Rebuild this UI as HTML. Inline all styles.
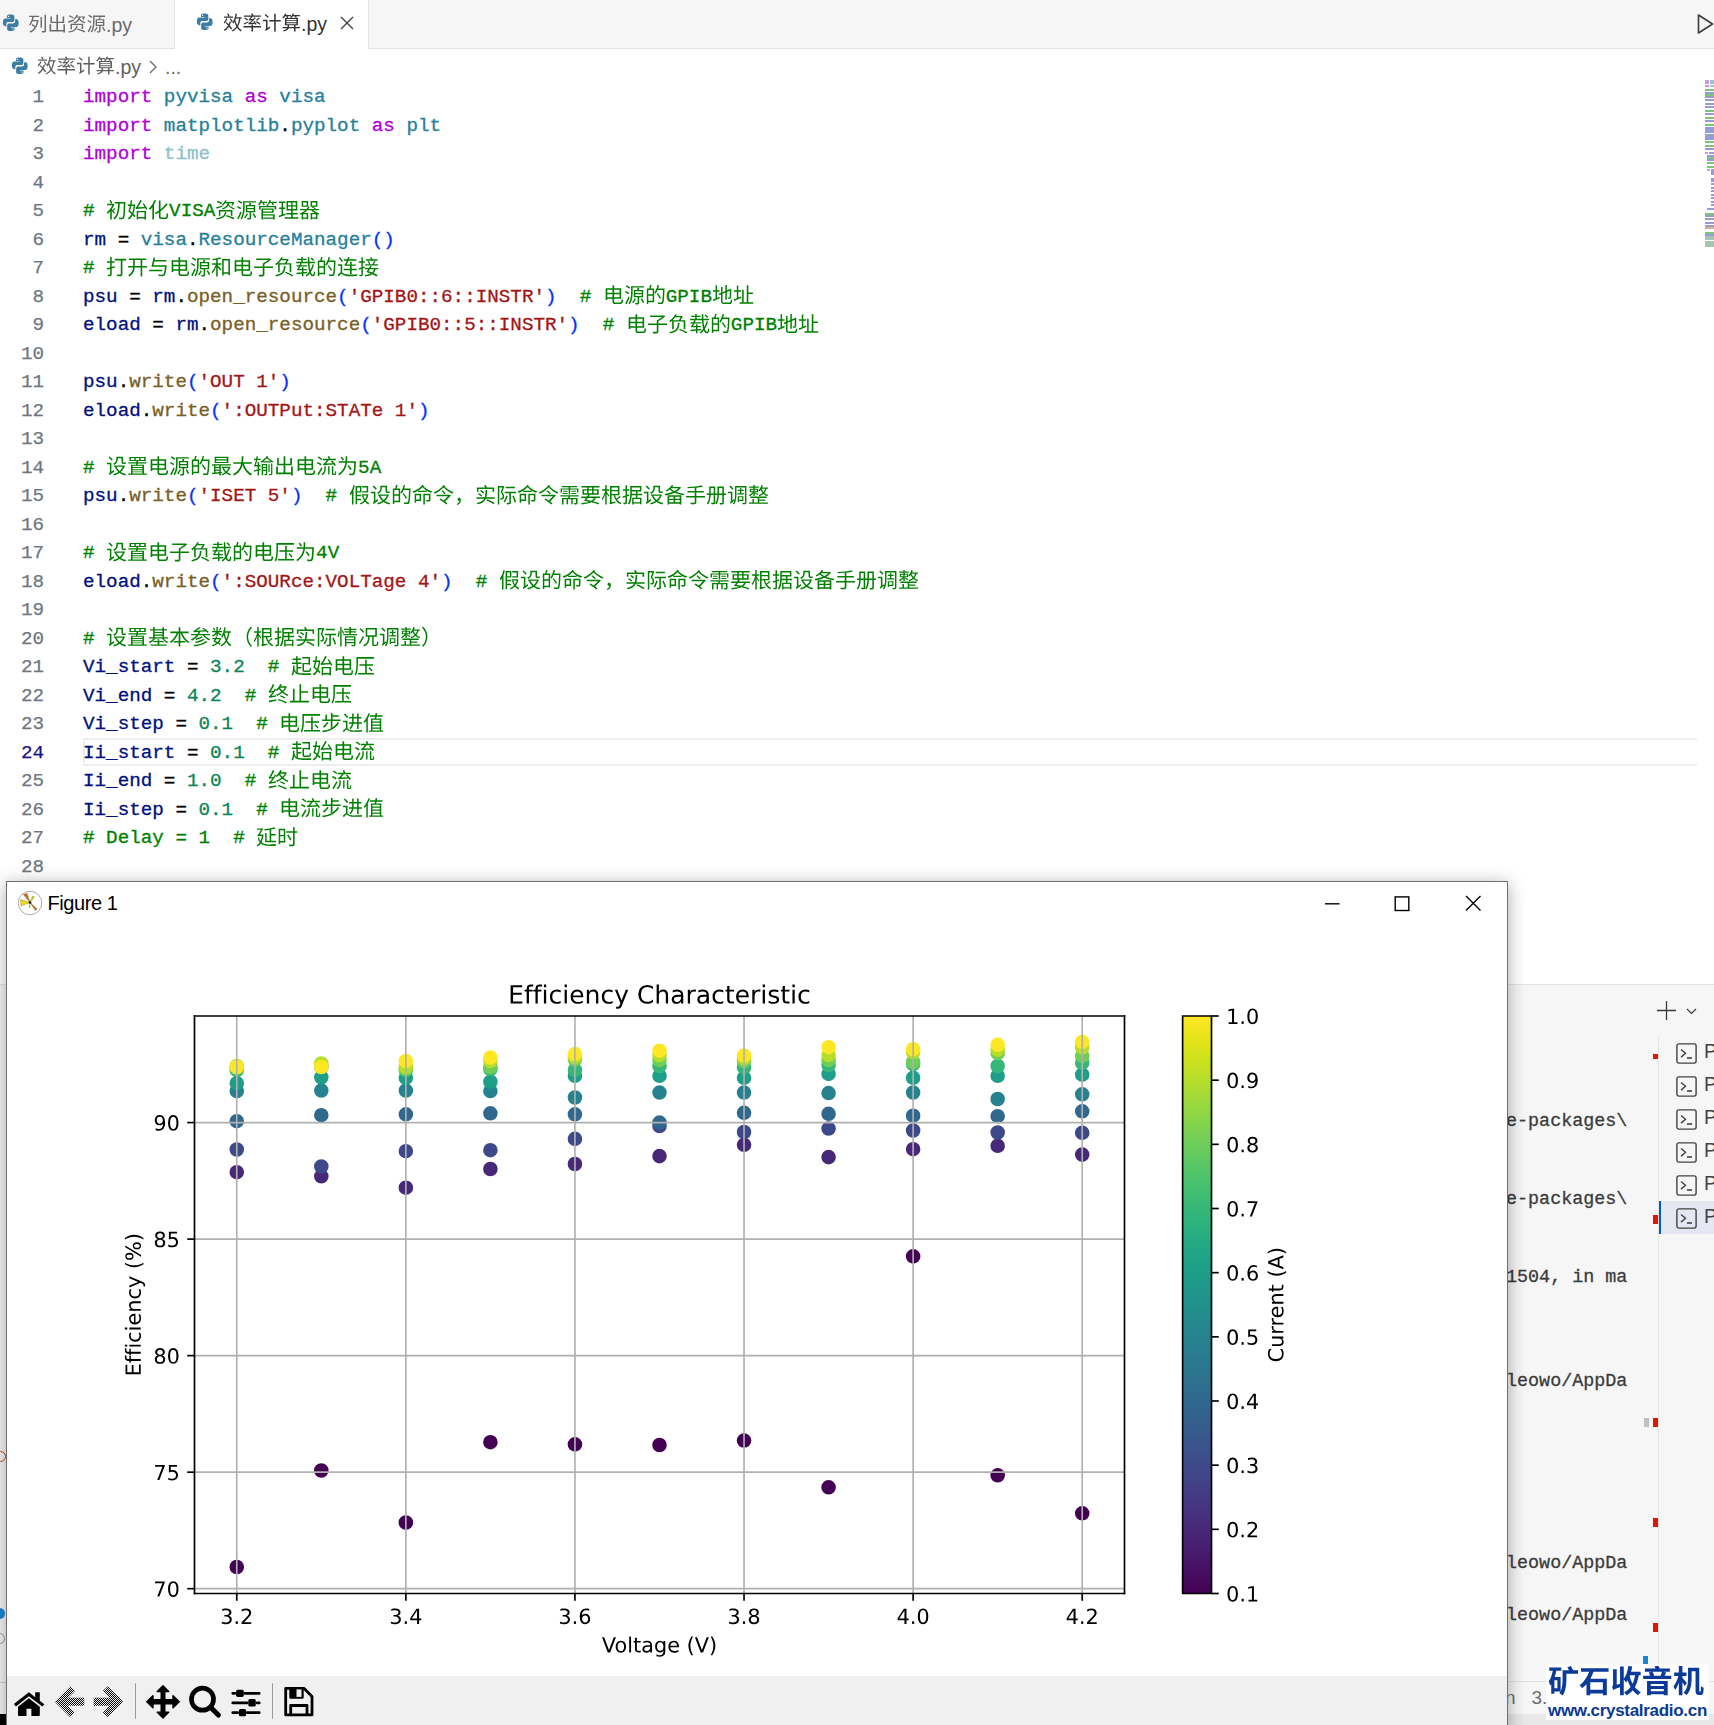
<!DOCTYPE html>
<html><head><meta charset="utf-8">
<style>
html,body{margin:0;padding:0;}
body{width:1714px;height:1725px;overflow:hidden;position:relative;background:#ffffff;font-family:"Liberation Sans",sans-serif;}
.abs{position:absolute;}
svg.cj{vertical-align:top;display:inline-block;}
#plot svg *{stroke-linejoin:round;stroke-linecap:butt;}
.ui{font-family:"Liberation Sans",sans-serif;font-size:19.5px;line-height:28px;vertical-align:top;display:inline-block;height:28px;}
#tabbar{position:absolute;left:0;top:0;width:1714px;height:48px;background:#f6f6f6;border-bottom:1px solid #e3e3e3;}
.tab{position:absolute;top:0;height:48px;border-right:1px solid #e5e5e5;}
#tab2{background:#fff;height:49px;}
.tabtxt{position:absolute;top:10px;white-space:nowrap;height:28px;}
.ln{position:absolute;left:0;width:44px;text-align:right;height:28.5px;line-height:28.5px;font-family:"Liberation Mono",monospace;font-size:19.25px;color:#6e7681;padding-top:1.5px;box-sizing:border-box;-webkit-text-stroke:0.25px currentColor;}
.ln.act{color:#171184;}
.cl{position:absolute;left:83px;height:28.5px;line-height:28.5px;white-space:pre;font-family:"Liberation Mono",monospace;font-size:19.25px;}
.cl span{position:absolute;height:28.5px;top:1.5px;-webkit-text-stroke:0.3px currentColor;}
#curline{position:absolute;left:83px;top:738px;width:1612px;height:24px;border:2px solid #eeeeee;border-right:none;}
#term{position:absolute;left:0;top:984px;width:1714px;height:741px;background:#f6f6f6;border-top:1px solid #e5e5e5;}
.tl{position:absolute;left:1506px;font-family:"Liberation Mono",monospace;font-size:18.4px;line-height:26px;height:26px;color:#3b3b3b;white-space:pre;-webkit-text-stroke:0.3px currentColor;}
.ticon{position:absolute;left:1676px;height:21px;}
.ticon svg{position:absolute;left:0;top:0;}
.tp{position:absolute;left:28px;top:-3px;font-size:19.5px;color:#424242;font-family:"Liberation Sans",sans-serif;}
#win{position:absolute;left:6px;top:881px;width:1500px;height:900px;border:1px solid #707070;background:#fff;box-shadow:0 3px 17px rgba(0,0,0,0.34);}
#tb{position:absolute;left:0;top:794px;width:1500px;height:120px;background:#f0f0f0;}
</style></head>
<body>
<svg width="0" height="0" style="position:absolute"><defs><path id="gR521d" d="M160 808C192 765 229 706 246 668L306 707C289 743 251 799 218 840ZM415 755V682H579C567 352 526 115 345 -23C362 -36 393 -66 404 -81C593 79 640 324 656 682H848C836 221 822 51 789 14C778 -1 766 -4 748 -4C724 -4 669 -3 608 2C621 -18 630 -50 631 -71C688 -74 744 -75 778 -72C812 -68 834 -58 856 -28C895 23 908 197 922 714C922 724 923 755 923 755ZM54 663V595H305C244 467 136 334 35 259C48 246 68 208 75 188C116 221 158 263 199 311V-79H276V322C315 274 360 215 381 184L427 244C414 259 380 297 346 335C375 361 410 395 443 428L391 470C373 442 339 402 310 372L276 407V409C326 480 370 558 400 636L357 666L343 663Z"/><path id="gR59cb" d="M462 327V-80H531V-36H833V-78H905V327ZM531 31V259H833V31ZM429 407C458 419 501 423 873 452C886 426 897 402 905 381L969 414C938 491 868 608 800 695L740 666C774 622 808 569 838 517L519 497C585 587 651 703 705 819L627 841C577 714 495 580 468 544C443 508 423 484 404 480C413 460 425 423 429 407ZM202 565H316C304 437 281 329 247 241C213 268 178 295 144 319C163 390 184 477 202 565ZM65 292C115 258 168 216 217 174C171 84 112 20 40 -19C56 -33 76 -60 86 -78C162 -31 223 34 271 124C309 87 342 52 364 21L410 82C385 115 347 154 303 193C349 305 377 448 389 630L345 637L333 635H216C229 703 240 770 248 831L178 836C171 774 161 705 148 635H43V565H134C113 462 88 363 65 292Z"/><path id="gR5316" d="M867 695C797 588 701 489 596 406V822H516V346C452 301 386 262 322 230C341 216 365 190 377 173C423 197 470 224 516 254V81C516 -31 546 -62 646 -62C668 -62 801 -62 824 -62C930 -62 951 4 962 191C939 197 907 213 887 228C880 57 873 13 820 13C791 13 678 13 654 13C606 13 596 24 596 79V309C725 403 847 518 939 647ZM313 840C252 687 150 538 42 442C58 425 83 386 92 369C131 407 170 452 207 502V-80H286V619C324 682 359 750 387 817Z"/><path id="gR8d44" d="M85 752C158 725 249 678 294 643L334 701C287 736 195 779 123 804ZM49 495 71 426C151 453 254 486 351 519L339 585C231 550 123 516 49 495ZM182 372V93H256V302H752V100H830V372ZM473 273C444 107 367 19 50 -20C62 -36 78 -64 83 -82C421 -34 513 73 547 273ZM516 75C641 34 807 -32 891 -76L935 -14C848 30 681 92 557 130ZM484 836C458 766 407 682 325 621C342 612 366 590 378 574C421 609 455 648 484 689H602C571 584 505 492 326 444C340 432 359 407 366 390C504 431 584 497 632 578C695 493 792 428 904 397C914 416 934 442 949 456C825 483 716 550 661 636C667 653 673 671 678 689H827C812 656 795 623 781 600L846 581C871 620 901 681 927 736L872 751L860 747H519C534 773 546 800 556 826Z"/><path id="gR6e90" d="M537 407H843V319H537ZM537 549H843V463H537ZM505 205C475 138 431 68 385 19C402 9 431 -9 445 -20C489 32 539 113 572 186ZM788 188C828 124 876 40 898 -10L967 21C943 69 893 152 853 213ZM87 777C142 742 217 693 254 662L299 722C260 751 185 797 131 829ZM38 507C94 476 169 428 207 400L251 460C212 488 136 531 81 560ZM59 -24 126 -66C174 28 230 152 271 258L211 300C166 186 103 54 59 -24ZM338 791V517C338 352 327 125 214 -36C231 -44 263 -63 276 -76C395 92 411 342 411 517V723H951V791ZM650 709C644 680 632 639 621 607H469V261H649V0C649 -11 645 -15 633 -16C620 -16 576 -16 529 -15C538 -34 547 -61 550 -79C616 -80 660 -80 687 -69C714 -58 721 -39 721 -2V261H913V607H694C707 633 720 663 733 692Z"/><path id="gR7ba1" d="M211 438V-81H287V-47H771V-79H845V168H287V237H792V438ZM771 12H287V109H771ZM440 623C451 603 462 580 471 559H101V394H174V500H839V394H915V559H548C539 584 522 614 507 637ZM287 380H719V294H287ZM167 844C142 757 98 672 43 616C62 607 93 590 108 580C137 613 164 656 189 703H258C280 666 302 621 311 592L375 614C367 638 350 672 331 703H484V758H214C224 782 233 806 240 830ZM590 842C572 769 537 699 492 651C510 642 541 626 554 616C575 640 595 669 612 702H683C713 665 742 618 755 589L816 616C805 640 784 672 761 702H940V758H638C648 781 656 805 663 829Z"/><path id="gR7406" d="M476 540H629V411H476ZM694 540H847V411H694ZM476 728H629V601H476ZM694 728H847V601H694ZM318 22V-47H967V22H700V160H933V228H700V346H919V794H407V346H623V228H395V160H623V22ZM35 100 54 24C142 53 257 92 365 128L352 201L242 164V413H343V483H242V702H358V772H46V702H170V483H56V413H170V141C119 125 73 111 35 100Z"/><path id="gR5668" d="M196 730H366V589H196ZM622 730H802V589H622ZM614 484C656 468 706 443 740 420H452C475 452 495 485 511 518L437 532V795H128V524H431C415 489 392 454 364 420H52V353H298C230 293 141 239 30 198C45 184 64 158 72 141L128 165V-80H198V-51H365V-74H437V229H246C305 267 355 309 396 353H582C624 307 679 264 739 229H555V-80H624V-51H802V-74H875V164L924 148C934 166 955 194 972 208C863 234 751 288 675 353H949V420H774L801 449C768 475 704 506 653 524ZM553 795V524H875V795ZM198 15V163H365V15ZM624 15V163H802V15Z"/><path id="gR6253" d="M199 840V638H48V566H199V353C139 337 84 322 39 311L62 236L199 276V20C199 6 193 1 179 1C166 0 122 0 75 1C85 -19 96 -50 99 -70C169 -70 210 -68 237 -56C263 -44 273 -23 273 19V298L423 343L413 414L273 374V566H412V638H273V840ZM418 756V681H703V31C703 12 696 6 676 6C654 4 582 4 508 7C520 -15 534 -52 539 -74C634 -74 697 -73 734 -60C770 -47 783 -21 783 30V681H961V756Z"/><path id="gR5f00" d="M649 703V418H369V461V703ZM52 418V346H288C274 209 223 75 54 -28C74 -41 101 -66 114 -84C299 33 351 189 365 346H649V-81H726V346H949V418H726V703H918V775H89V703H293V461L292 418Z"/><path id="gR4e0e" d="M57 238V166H681V238ZM261 818C236 680 195 491 164 380L227 379H243H807C784 150 758 45 721 15C708 4 694 3 669 3C640 3 562 4 484 11C499 -10 510 -41 512 -64C583 -68 655 -70 691 -68C734 -65 760 -59 786 -33C832 11 859 127 888 413C890 424 891 450 891 450H261C273 504 287 567 300 630H876V702H315L336 810Z"/><path id="gR7535" d="M452 408V264H204V408ZM531 408H788V264H531ZM452 478H204V621H452ZM531 478V621H788V478ZM126 695V129H204V191H452V85C452 -32 485 -63 597 -63C622 -63 791 -63 818 -63C925 -63 949 -10 962 142C939 148 907 162 887 176C880 46 870 13 814 13C778 13 632 13 602 13C542 13 531 25 531 83V191H865V695H531V838H452V695Z"/><path id="gR548c" d="M531 747V-35H604V47H827V-28H903V747ZM604 119V675H827V119ZM439 831C351 795 193 765 60 747C68 730 78 704 81 687C134 693 191 701 247 711V544H50V474H228C182 348 102 211 26 134C39 115 58 86 67 64C132 133 198 248 247 366V-78H321V363C364 306 420 230 443 192L489 254C465 285 358 411 321 449V474H496V544H321V726C384 739 442 754 489 772Z"/><path id="gR5b50" d="M465 540V395H51V320H465V20C465 2 458 -3 438 -4C416 -5 342 -6 261 -2C273 -24 287 -58 293 -80C389 -80 454 -78 491 -66C530 -54 543 -31 543 19V320H953V395H543V501C657 560 786 650 873 734L816 777L799 772H151V698H716C645 640 548 579 465 540Z"/><path id="gR8d1f" d="M523 92C652 36 784 -31 864 -80L921 -28C836 20 697 87 569 140ZM471 413C454 165 412 39 62 -16C76 -31 94 -60 99 -79C471 -14 529 134 549 413ZM341 687H603C578 642 546 593 514 553H225C268 596 307 641 341 687ZM347 839C295 734 194 603 54 508C72 497 97 473 110 456C141 479 171 503 198 528V119H273V486H746V119H824V553H599C639 605 679 667 706 721L656 754L643 750H385C401 775 416 800 429 825Z"/><path id="gR8f7d" d="M736 784C782 745 835 690 858 653L915 693C890 730 836 783 790 819ZM839 501C813 406 776 314 729 231C710 319 697 428 689 553H951V614H686C683 685 682 760 683 839H609C609 762 611 686 614 614H368V700H545V760H368V841H296V760H105V700H296V614H54V553H617C627 394 646 253 676 145C627 75 571 15 507 -31C525 -44 547 -66 560 -82C613 -41 661 9 704 64C741 -22 791 -72 856 -72C926 -72 951 -26 963 124C945 131 919 146 904 163C898 46 888 1 863 1C820 1 783 50 755 136C820 239 870 357 906 481ZM65 92 73 22 333 49V-76H403V56L585 75V137L403 120V214H562V279H403V360H333V279H194C216 312 237 350 258 391H583V453H288C300 479 311 505 321 531L247 551C237 518 224 484 211 453H69V391H183C166 357 152 331 144 319C128 292 113 272 98 269C107 250 117 215 121 200C130 208 160 214 202 214H333V114Z"/><path id="gR7684" d="M552 423C607 350 675 250 705 189L769 229C736 288 667 385 610 456ZM240 842C232 794 215 728 199 679H87V-54H156V25H435V679H268C285 722 304 778 321 828ZM156 612H366V401H156ZM156 93V335H366V93ZM598 844C566 706 512 568 443 479C461 469 492 448 506 436C540 484 572 545 600 613H856C844 212 828 58 796 24C784 10 773 7 753 7C730 7 670 8 604 13C618 -6 627 -38 629 -59C685 -62 744 -64 778 -61C814 -57 836 -49 859 -19C899 30 913 185 928 644C929 654 929 682 929 682H627C643 729 658 779 670 828Z"/><path id="gR8fde" d="M83 792C134 735 196 658 223 609L285 651C255 699 193 775 141 829ZM248 501H45V431H176V117C133 99 82 52 30 -9L86 -82C132 -12 177 52 208 52C230 52 264 16 306 -12C378 -58 463 -69 593 -69C694 -69 879 -63 950 -58C952 -35 964 5 974 26C873 15 720 6 596 6C479 6 391 13 325 56C290 78 267 98 248 110ZM376 408C385 417 420 423 468 423H622V286H316V216H622V32H699V216H941V286H699V423H893L894 493H699V616H622V493H458C488 545 517 606 545 670H923V736H571L602 819L524 840C515 805 503 770 490 736H324V670H464C440 612 417 565 406 546C386 510 369 485 352 481C360 461 373 424 376 408Z"/><path id="gR63a5" d="M456 635C485 595 515 539 528 504L588 532C575 566 543 619 513 659ZM160 839V638H41V568H160V347C110 332 64 318 28 309L47 235L160 272V9C160 -4 155 -8 143 -8C132 -8 96 -8 57 -7C66 -27 76 -59 78 -77C136 -78 173 -75 196 -63C220 -51 230 -31 230 10V295L329 327L319 397L230 369V568H330V638H230V839ZM568 821C584 795 601 764 614 735H383V669H926V735H693C678 766 657 803 637 832ZM769 658C751 611 714 545 684 501H348V436H952V501H758C785 540 814 591 840 637ZM765 261C745 198 715 148 671 108C615 131 558 151 504 168C523 196 544 228 564 261ZM400 136C465 116 537 91 606 62C536 23 442 -1 320 -14C333 -29 345 -57 352 -78C496 -57 604 -24 682 29C764 -8 837 -47 886 -82L935 -25C886 9 817 44 741 78C788 126 820 186 840 261H963V326H601C618 357 633 388 646 418L576 431C562 398 544 362 524 326H335V261H486C457 215 427 171 400 136Z"/><path id="gR5730" d="M429 747V473L321 428L349 361L429 395V79C429 -30 462 -57 577 -57C603 -57 796 -57 824 -57C928 -57 953 -13 964 125C944 128 914 140 897 153C890 38 880 11 821 11C781 11 613 11 580 11C513 11 501 22 501 77V426L635 483V143H706V513L846 573C846 412 844 301 839 277C834 254 825 250 809 250C799 250 766 250 742 252C751 235 757 206 760 186C788 186 828 186 854 194C884 201 903 219 909 260C916 299 918 449 918 637L922 651L869 671L855 660L840 646L706 590V840H635V560L501 504V747ZM33 154 63 79C151 118 265 169 372 219L355 286L241 238V528H359V599H241V828H170V599H42V528H170V208C118 187 71 168 33 154Z"/><path id="gR5740" d="M434 621V28H312V-44H962V28H731V421H947V494H731V833H655V28H508V621ZM34 163 62 89C156 127 279 179 393 229L380 295L252 245V528H383V599H252V827H182V599H45V528H182V218C126 196 75 177 34 163Z"/><path id="gR8bbe" d="M122 776C175 729 242 662 273 619L324 672C292 713 225 778 171 822ZM43 526V454H184V95C184 49 153 16 134 4C148 -11 168 -42 175 -60C190 -40 217 -20 395 112C386 127 374 155 368 175L257 94V526ZM491 804V693C491 619 469 536 337 476C351 464 377 435 386 420C530 489 562 597 562 691V734H739V573C739 497 753 469 823 469C834 469 883 469 898 469C918 469 939 470 951 474C948 491 946 520 944 539C932 536 911 534 897 534C884 534 839 534 828 534C812 534 810 543 810 572V804ZM805 328C769 248 715 182 649 129C582 184 529 251 493 328ZM384 398V328H436L422 323C462 231 519 151 590 86C515 38 429 5 341 -15C355 -31 371 -61 377 -80C474 -54 566 -16 647 39C723 -17 814 -58 917 -83C926 -62 947 -32 963 -16C867 4 781 39 708 86C793 160 861 256 901 381L855 401L842 398Z"/><path id="gR7f6e" d="M651 748H820V658H651ZM417 748H582V658H417ZM189 748H348V658H189ZM190 427V6H57V-50H945V6H808V427H495L509 486H922V545H520L531 603H895V802H117V603H454L446 545H68V486H436L424 427ZM262 6V68H734V6ZM262 275H734V217H262ZM262 320V376H734V320ZM262 172H734V113H262Z"/><path id="gR6700" d="M248 635H753V564H248ZM248 755H753V685H248ZM176 808V511H828V808ZM396 392V325H214V392ZM47 43 54 -24 396 17V-80H468V26L522 33V94L468 88V392H949V455H49V392H145V52ZM507 330V268H567L547 262C577 189 618 124 671 70C616 29 554 -2 491 -22C504 -35 522 -61 529 -77C596 -53 662 -19 720 26C776 -20 843 -55 919 -77C929 -59 948 -32 964 -18C891 0 826 31 771 71C837 135 889 215 920 314L877 333L863 330ZM613 268H832C806 209 767 157 721 113C675 157 639 209 613 268ZM396 269V198H214V269ZM396 142V80L214 59V142Z"/><path id="gR5927" d="M461 839C460 760 461 659 446 553H62V476H433C393 286 293 92 43 -16C64 -32 88 -59 100 -78C344 34 452 226 501 419C579 191 708 14 902 -78C915 -56 939 -25 958 -8C764 73 633 255 563 476H942V553H526C540 658 541 758 542 839Z"/><path id="gR8f93" d="M734 447V85H793V447ZM861 484V5C861 -6 857 -9 846 -10C833 -10 793 -10 747 -9C757 -27 765 -54 767 -71C826 -71 866 -70 890 -60C915 -49 922 -31 922 5V484ZM71 330C79 338 108 344 140 344H219V206C152 190 90 176 42 167L59 96L219 137V-79H285V154L368 176L362 239L285 221V344H365V413H285V565H219V413H132C158 483 183 566 203 652H367V720H217C225 756 231 792 236 827L166 839C162 800 157 759 150 720H47V652H137C119 569 100 501 91 475C77 430 65 398 48 393C56 376 67 344 71 330ZM659 843C593 738 469 639 348 583C366 568 386 545 397 527C424 541 451 557 477 574V532H847V581C872 566 899 551 926 537C935 557 956 581 974 596C869 641 774 698 698 783L720 816ZM506 594C562 635 615 683 659 734C710 678 765 633 826 594ZM614 406V327H477V406ZM415 466V-76H477V130H614V-1C614 -10 612 -12 604 -13C594 -13 568 -13 537 -12C546 -30 554 -57 556 -74C599 -74 630 -74 651 -63C672 -52 677 -33 677 -1V466ZM477 269H614V187H477Z"/><path id="gR51fa" d="M104 341V-21H814V-78H895V341H814V54H539V404H855V750H774V477H539V839H457V477H228V749H150V404H457V54H187V341Z"/><path id="gR6d41" d="M577 361V-37H644V361ZM400 362V259C400 167 387 56 264 -28C281 -39 306 -62 317 -77C452 19 468 148 468 257V362ZM755 362V44C755 -16 760 -32 775 -46C788 -58 810 -63 830 -63C840 -63 867 -63 879 -63C896 -63 916 -59 927 -52C941 -44 949 -32 954 -13C959 5 962 58 964 102C946 108 924 118 911 130C910 82 909 46 907 29C905 13 902 6 897 2C892 -1 884 -2 875 -2C867 -2 854 -2 847 -2C840 -2 834 -1 831 2C826 7 825 17 825 37V362ZM85 774C145 738 219 684 255 645L300 704C264 742 189 794 129 827ZM40 499C104 470 183 423 222 388L264 450C224 484 144 528 80 554ZM65 -16 128 -67C187 26 257 151 310 257L256 306C198 193 119 61 65 -16ZM559 823C575 789 591 746 603 710H318V642H515C473 588 416 517 397 499C378 482 349 475 330 471C336 454 346 417 350 399C379 410 425 414 837 442C857 415 874 390 886 369L947 409C910 468 833 560 770 627L714 593C738 566 765 534 790 503L476 485C515 530 562 592 600 642H945V710H680C669 748 648 799 627 840Z"/><path id="gR4e3a" d="M162 784C202 737 247 673 267 632L335 665C314 706 267 768 226 812ZM499 371C550 310 609 226 635 173L701 209C674 261 613 342 561 401ZM411 838V720C411 682 410 642 407 599H82V524H399C374 346 295 145 55 -11C73 -23 101 -49 114 -66C370 104 452 328 476 524H821C807 184 791 50 761 19C750 7 739 4 717 5C693 5 630 5 562 11C577 -11 587 -44 588 -67C650 -70 713 -72 748 -69C785 -65 808 -57 831 -28C870 18 884 159 900 560C900 572 901 599 901 599H484C486 641 487 682 487 719V838Z"/><path id="gR5047" d="M629 796V731H841V550H629V485H912V796ZM210 835C173 680 112 527 35 426C48 408 69 368 76 351C99 381 121 416 142 453V-79H214V610C240 677 262 748 280 819ZM314 796V-77H383V123H578V187H383V312H567V376H383V483H589V796ZM845 344C826 272 797 210 760 158C725 214 697 277 679 344ZM601 407V344H670L620 332C643 248 675 171 718 105C661 44 592 0 516 -27C530 -40 546 -65 555 -82C632 -51 700 -8 758 51C803 -5 857 -49 921 -78C932 -61 952 -35 967 -21C903 5 847 48 802 102C859 177 901 273 925 395L882 409L870 407ZM383 732H523V547H383Z"/><path id="gR547d" d="M505 852C411 718 219 591 34 542C50 522 68 491 78 469C151 493 226 529 296 571V508H696V575C765 532 839 497 911 474C924 496 948 529 967 546C808 586 638 683 547 786L565 809ZM304 576C378 622 447 677 503 735C555 677 621 622 694 576ZM128 425V-3H197V82H433V425ZM197 358H362V149H197ZM539 425V-81H612V357H804V143C804 131 800 127 786 126C772 126 724 126 668 127C677 106 687 78 690 57C766 57 813 57 841 69C870 82 877 103 877 143V425Z"/><path id="gR4ee4" d="M400 558C456 513 522 447 552 404L609 451C578 494 509 558 454 601ZM168 378V306H712C655 246 581 173 513 108C461 143 407 176 360 204L307 151C418 83 562 -19 630 -85L687 -22C659 3 620 34 576 65C673 160 781 270 856 349L800 383L787 378ZM510 844C406 702 217 568 35 491C56 473 78 447 90 428C239 498 390 603 504 722C617 606 783 492 918 430C930 451 956 482 974 498C832 553 655 666 551 774L578 808Z"/><path id="gRff0c" d="M157 -107C262 -70 330 12 330 120C330 190 300 235 245 235C204 235 169 210 169 163C169 116 203 92 244 92L261 94C256 25 212 -22 135 -54Z"/><path id="gR5b9e" d="M538 107C671 57 804 -12 885 -74L931 -15C848 44 708 113 574 162ZM240 557C294 525 358 475 387 440L435 494C404 530 339 575 285 605ZM140 401C197 370 264 320 296 284L342 341C309 376 241 422 185 451ZM90 726V523H165V656H834V523H912V726H569C554 761 528 810 503 847L429 824C447 794 466 758 480 726ZM71 256V191H432C376 94 273 29 81 -11C97 -28 116 -57 124 -77C349 -25 461 62 518 191H935V256H541C570 353 577 469 581 606H503C499 464 493 349 461 256Z"/><path id="gR9645" d="M462 764V693H899V764ZM776 325C823 225 869 95 884 16L954 41C937 120 888 247 840 345ZM488 342C461 236 416 129 361 57C377 49 408 28 421 18C475 94 526 211 556 327ZM86 797V-80H157V729H303C281 662 251 575 222 503C296 423 314 354 314 299C314 269 308 241 292 230C284 224 272 221 260 221C244 219 224 220 200 222C213 203 220 174 220 156C244 155 270 155 290 157C312 160 330 166 345 175C375 196 387 239 387 293C387 355 369 428 294 511C329 591 367 689 397 771L344 800L332 797ZM419 525V454H632V16C632 3 628 -1 614 -1C600 -2 553 -2 501 -1C512 -24 522 -56 525 -78C595 -78 641 -76 670 -64C700 -51 708 -28 708 15V454H953V525Z"/><path id="gR9700" d="M194 571V521H409V571ZM172 466V416H410V466ZM585 466V415H830V466ZM585 571V521H806V571ZM76 681V490H144V626H461V389H533V626H855V490H925V681H533V740H865V800H134V740H461V681ZM143 224V-78H214V162H362V-72H431V162H584V-72H653V162H809V-4C809 -14 807 -17 795 -17C785 -18 751 -18 710 -17C719 -35 730 -61 734 -80C788 -80 826 -80 851 -68C876 -58 882 -40 882 -5V224H504L531 295H938V356H65V295H453C447 272 440 247 432 224Z"/><path id="gR8981" d="M672 232C639 174 593 129 532 93C459 111 384 127 310 141C331 168 355 199 378 232ZM119 645V386H386C372 358 355 328 336 298H54V232H291C256 183 219 137 186 101C271 85 354 68 433 49C335 15 211 -4 59 -13C72 -30 84 -57 90 -78C279 -62 428 -33 541 22C668 -12 778 -47 860 -80L924 -22C844 8 739 40 623 71C680 113 724 166 755 232H947V298H422C438 324 453 350 466 375L420 386H888V645H647V730H930V797H69V730H342V645ZM413 730H576V645H413ZM190 583H342V447H190ZM413 583H576V447H413ZM647 583H814V447H647Z"/><path id="gR6839" d="M203 840V647H50V577H196C164 440 100 281 35 197C48 179 67 146 75 124C122 190 168 298 203 411V-79H272V437C299 387 330 328 344 296L390 350C373 379 297 495 272 529V577H391V647H272V840ZM804 546V422H504V546ZM804 609H504V730H804ZM433 -80C452 -68 483 -57 690 0C688 15 686 45 687 65L504 22V356H603C655 155 752 2 913 -73C925 -52 948 -23 965 -8C881 25 814 81 763 153C818 185 885 229 935 271L885 324C846 288 782 240 729 207C704 252 684 302 668 356H877V796H430V44C430 5 415 -9 401 -16C412 -31 428 -63 433 -80Z"/><path id="gR636e" d="M484 238V-81H550V-40H858V-77H927V238H734V362H958V427H734V537H923V796H395V494C395 335 386 117 282 -37C299 -45 330 -67 344 -79C427 43 455 213 464 362H663V238ZM468 731H851V603H468ZM468 537H663V427H467L468 494ZM550 22V174H858V22ZM167 839V638H42V568H167V349C115 333 67 319 29 309L49 235L167 273V14C167 0 162 -4 150 -4C138 -5 99 -5 56 -4C65 -24 75 -55 77 -73C140 -74 179 -71 203 -59C228 -48 237 -27 237 14V296L352 334L341 403L237 370V568H350V638H237V839Z"/><path id="gR5907" d="M685 688C637 637 572 593 498 555C430 589 372 630 329 677L340 688ZM369 843C319 756 221 656 76 588C93 576 116 551 128 533C184 562 233 595 276 630C317 588 365 551 420 519C298 468 160 433 30 415C43 398 58 365 64 344C209 368 363 411 499 477C624 417 772 378 926 358C936 379 956 410 973 427C831 443 694 473 578 519C673 575 754 644 808 727L759 758L746 754H399C418 778 435 802 450 827ZM248 129H460V18H248ZM248 190V291H460V190ZM746 129V18H537V129ZM746 190H537V291H746ZM170 357V-80H248V-48H746V-78H827V357Z"/><path id="gR624b" d="M50 322V248H463V25C463 5 454 -2 432 -3C409 -3 330 -4 246 -2C258 -22 272 -55 278 -76C383 -77 449 -76 487 -63C524 -51 540 -29 540 25V248H953V322H540V484H896V556H540V719C658 733 768 753 853 778L798 839C645 791 354 765 116 753C123 737 132 707 134 688C238 692 352 699 463 710V556H117V484H463V322Z"/><path id="gR518c" d="M544 775V464V443H440V775H154V466V443H42V371H152C146 236 124 83 40 -33C56 -43 84 -70 95 -86C187 40 216 220 224 371H367V15C367 0 362 -4 348 -5C334 -6 288 -6 237 -4C247 -23 259 -54 262 -72C332 -72 376 -71 403 -59C430 -47 440 -26 440 14V371H542C537 238 517 85 443 -31C458 -40 488 -68 499 -82C583 43 609 222 615 371H777V12C777 -3 772 -8 756 -9C743 -10 694 -10 642 -9C653 -28 663 -60 667 -79C740 -79 785 -78 813 -66C841 -54 851 -31 851 11V371H958V443H851V775ZM226 704H367V443H226V466ZM617 443V464V704H777V443Z"/><path id="gR8c03" d="M105 772C159 726 226 659 256 615L309 668C277 710 209 774 154 818ZM43 526V454H184V107C184 54 148 15 128 -1C142 -12 166 -37 175 -52C188 -35 212 -15 345 91C331 44 311 0 283 -39C298 -47 327 -68 338 -79C436 57 450 268 450 422V728H856V11C856 -4 851 -9 836 -9C822 -10 775 -10 723 -8C733 -27 744 -58 747 -77C818 -77 861 -76 888 -65C915 -52 924 -30 924 10V795H383V422C383 327 380 216 352 113C344 128 335 149 330 164L257 108V526ZM620 698V614H512V556H620V454H490V397H818V454H681V556H793V614H681V698ZM512 315V35H570V81H781V315ZM570 259H723V138H570Z"/><path id="gR6574" d="M212 178V11H47V-53H955V11H536V94H824V152H536V230H890V294H114V230H462V11H284V178ZM86 669V495H233C186 441 108 388 39 362C54 351 73 329 83 313C142 340 207 390 256 443V321H322V451C369 426 425 389 455 363L488 407C458 434 399 470 351 492L322 457V495H487V669H322V720H513V777H322V840H256V777H57V720H256V669ZM148 619H256V545H148ZM322 619H423V545H322ZM642 665H815C798 606 771 556 735 514C693 561 662 614 642 665ZM639 840C611 739 561 645 495 585C510 573 535 547 546 534C567 554 586 578 605 605C626 559 654 512 691 469C639 424 573 390 496 365C510 352 532 324 540 310C616 339 682 375 736 422C785 375 846 335 919 307C928 325 948 353 962 366C890 389 830 425 781 467C828 521 864 586 887 665H952V728H672C686 759 697 792 707 825Z"/><path id="gR538b" d="M684 271C738 224 798 157 825 113L883 156C854 199 794 261 739 307ZM115 792V469C115 317 109 109 32 -39C49 -46 81 -68 94 -80C175 75 187 309 187 469V720H956V792ZM531 665V450H258V379H531V34H192V-37H952V34H607V379H904V450H607V665Z"/><path id="gR57fa" d="M684 839V743H320V840H245V743H92V680H245V359H46V295H264C206 224 118 161 36 128C52 114 74 88 85 70C182 116 284 201 346 295H662C723 206 821 123 917 82C929 100 951 127 967 141C883 171 798 229 741 295H955V359H760V680H911V743H760V839ZM320 680H684V613H320ZM460 263V179H255V117H460V11H124V-53H882V11H536V117H746V179H536V263ZM320 557H684V487H320ZM320 430H684V359H320Z"/><path id="gR672c" d="M460 839V629H65V553H367C294 383 170 221 37 140C55 125 80 98 92 79C237 178 366 357 444 553H460V183H226V107H460V-80H539V107H772V183H539V553H553C629 357 758 177 906 81C920 102 946 131 965 146C826 226 700 384 628 553H937V629H539V839Z"/><path id="gR53c2" d="M548 401C480 353 353 308 254 284C272 269 291 247 302 231C404 260 530 310 610 368ZM635 284C547 219 381 166 239 140C254 124 272 100 282 82C433 115 598 174 698 253ZM761 177C649 69 422 8 176 -17C191 -34 205 -62 213 -82C470 -50 703 18 829 144ZM179 591C202 599 233 602 404 611C390 578 374 547 356 517H53V450H307C237 365 145 299 39 253C56 239 85 209 96 194C216 254 322 338 401 450H606C681 345 801 250 915 199C926 218 950 246 966 261C867 298 761 370 691 450H950V517H443C460 548 476 581 489 615L769 628C795 605 817 583 833 564L895 609C840 670 728 754 637 810L579 771C617 746 659 717 699 686L312 672C375 710 439 757 499 808L431 845C359 775 260 710 228 693C200 676 177 665 157 663C165 643 175 607 179 591Z"/><path id="gR6570" d="M443 821C425 782 393 723 368 688L417 664C443 697 477 747 506 793ZM88 793C114 751 141 696 150 661L207 686C198 722 171 776 143 815ZM410 260C387 208 355 164 317 126C279 145 240 164 203 180C217 204 233 231 247 260ZM110 153C159 134 214 109 264 83C200 37 123 5 41 -14C54 -28 70 -54 77 -72C169 -47 254 -8 326 50C359 30 389 11 412 -6L460 43C437 59 408 77 375 95C428 152 470 222 495 309L454 326L442 323H278L300 375L233 387C226 367 216 345 206 323H70V260H175C154 220 131 183 110 153ZM257 841V654H50V592H234C186 527 109 465 39 435C54 421 71 395 80 378C141 411 207 467 257 526V404H327V540C375 505 436 458 461 435L503 489C479 506 391 562 342 592H531V654H327V841ZM629 832C604 656 559 488 481 383C497 373 526 349 538 337C564 374 586 418 606 467C628 369 657 278 694 199C638 104 560 31 451 -22C465 -37 486 -67 493 -83C595 -28 672 41 731 129C781 44 843 -24 921 -71C933 -52 955 -26 972 -12C888 33 822 106 771 198C824 301 858 426 880 576H948V646H663C677 702 689 761 698 821ZM809 576C793 461 769 361 733 276C695 366 667 468 648 576Z"/><path id="gRff08" d="M695 380C695 185 774 26 894 -96L954 -65C839 54 768 202 768 380C768 558 839 706 954 825L894 856C774 734 695 575 695 380Z"/><path id="gR60c5" d="M152 840V-79H220V840ZM73 647C67 569 51 458 27 390L86 370C109 445 125 561 129 640ZM229 674C250 627 273 564 282 526L335 552C325 588 301 648 279 694ZM446 210H808V134H446ZM446 267V342H808V267ZM590 840V762H334V704H590V640H358V585H590V516H304V458H958V516H664V585H903V640H664V704H928V762H664V840ZM376 400V-79H446V77H808V5C808 -7 803 -11 790 -12C776 -13 728 -13 677 -11C686 -29 696 -57 699 -76C770 -76 815 -76 843 -64C871 -53 879 -33 879 4V400Z"/><path id="gR51b5" d="M71 734C134 684 207 610 240 560L296 616C261 665 186 735 123 783ZM40 89 100 36C161 129 235 257 290 364L239 415C178 301 96 167 40 89ZM439 721H821V450H439ZM367 793V378H482C471 177 438 48 243 -21C260 -35 281 -62 290 -80C502 1 544 150 558 378H676V37C676 -42 695 -65 771 -65C786 -65 857 -65 874 -65C943 -65 961 -25 968 128C948 134 917 145 901 158C898 25 894 3 866 3C851 3 792 3 781 3C754 3 748 8 748 38V378H897V793Z"/><path id="gRff09" d="M305 380C305 575 226 734 106 856L46 825C161 706 232 558 232 380C232 202 161 54 46 -65L106 -96C226 26 305 185 305 380Z"/><path id="gR8d77" d="M99 387C96 209 85 48 26 -53C44 -61 77 -79 90 -88C119 -33 138 37 150 116C222 -21 342 -54 555 -54H940C945 -32 958 3 971 20C908 17 603 17 554 18C460 18 386 25 328 47V251H491V317H328V466H501V534H312V660H476V727H312V839H241V727H74V660H241V534H48V466H259V85C216 119 186 170 163 244C166 288 169 334 170 382ZM548 516V189C548 104 576 82 670 82C690 82 824 82 846 82C931 82 953 119 962 261C942 266 911 278 895 291C890 170 884 150 841 150C810 150 699 150 677 150C629 150 620 156 620 189V449H833V424H905V792H538V726H833V516Z"/><path id="gR7ec8" d="M35 53 48 -20C145 0 275 26 399 53L393 119C262 94 126 67 35 53ZM565 264C637 236 727 187 774 151L819 204C771 239 682 285 609 313ZM454 79C591 42 757 -26 847 -79L891 -19C799 31 633 98 499 133ZM583 840C546 751 475 641 372 558L390 588L327 626C308 589 286 552 263 517L134 505C194 592 253 703 299 812L227 841C185 721 112 591 89 558C68 524 50 500 31 496C40 477 52 440 56 424C71 431 95 437 219 451C175 387 135 337 117 318C85 281 61 257 39 253C48 234 59 199 63 184C85 196 119 203 379 244C377 259 376 288 376 308L165 278C237 359 308 456 370 555C387 545 411 522 423 506C462 538 496 573 526 609C556 561 592 515 632 473C556 411 469 363 380 331C396 317 419 287 428 269C516 305 604 357 682 423C756 357 840 303 927 268C938 287 960 316 977 331C891 361 807 410 735 471C803 539 861 619 900 711L853 739L840 736H614C632 767 648 797 661 827ZM572 669H799C769 614 729 563 683 518C637 563 598 613 569 664Z"/><path id="gR6b62" d="M188 619V44H49V-30H949V44H577V430H905V505H577V837H499V44H265V619Z"/><path id="gR6b65" d="M291 420C244 338 164 257 89 204C106 191 133 162 145 147C222 209 308 303 363 396ZM210 762V535H60V463H465V146H537C411 71 249 24 51 -3C67 -23 83 -53 90 -75C473 -16 728 118 859 378L788 411C733 301 652 215 544 150V463H937V535H551V663H846V733H551V840H472V535H286V762Z"/><path id="gR8fdb" d="M81 778C136 728 203 655 234 609L292 657C259 701 190 770 135 819ZM720 819V658H555V819H481V658H339V586H481V469L479 407H333V335H471C456 259 423 185 348 128C364 117 392 89 402 74C491 142 530 239 545 335H720V80H795V335H944V407H795V586H924V658H795V819ZM555 586H720V407H553L555 468ZM262 478H50V408H188V121C143 104 91 60 38 2L88 -66C140 2 189 61 223 61C245 61 277 28 319 2C388 -42 472 -53 596 -53C691 -53 871 -47 942 -43C943 -21 955 15 964 35C867 24 716 16 598 16C485 16 401 23 335 64C302 85 281 104 262 115Z"/><path id="gR503c" d="M599 840C596 810 591 774 586 738H329V671H574C568 637 562 605 555 578H382V14H286V-51H958V14H869V578H623C631 605 639 637 646 671H928V738H661L679 835ZM450 14V97H799V14ZM450 379H799V293H450ZM450 435V519H799V435ZM450 239H799V152H450ZM264 839C211 687 124 538 32 440C45 422 66 383 74 366C103 398 132 435 159 475V-80H229V589C269 661 304 739 333 817Z"/><path id="gR5ef6" d="M435 560V122H949V191H724V444H941V512H724V724C802 738 874 756 933 776L876 835C767 794 567 760 395 741C404 724 414 697 416 679C491 687 572 698 650 711V191H505V560ZM93 395C93 403 107 412 120 420H280C266 328 244 249 214 183C182 226 157 279 137 345L77 322C104 236 138 170 180 118C140 52 90 2 32 -34C49 -44 77 -70 88 -87C143 -51 191 -1 232 63C341 -31 488 -54 669 -54H937C942 -33 955 1 968 19C914 17 712 17 671 17C506 17 367 37 267 125C311 218 343 334 360 478L315 490L302 488H186C237 563 290 658 338 757L291 787L268 777H50V709H237C196 621 145 539 127 515C106 484 81 459 63 455C73 440 87 409 93 395Z"/><path id="gR65f6" d="M474 452C527 375 595 269 627 208L693 246C659 307 590 409 536 485ZM324 402V174H153V402ZM324 469H153V688H324ZM81 756V25H153V106H394V756ZM764 835V640H440V566H764V33C764 13 756 6 736 6C714 4 640 4 562 7C573 -15 585 -49 590 -70C690 -70 754 -69 790 -56C826 -44 840 -22 840 33V566H962V640H840V835Z"/><path id="gR5217" d="M642 724V164H716V724ZM848 835V17C848 1 842 -4 826 -4C810 -5 758 -5 703 -3C713 -24 725 -56 728 -76C805 -76 853 -74 882 -63C912 -51 924 -29 924 18V835ZM181 302C232 267 294 218 333 181C265 85 178 17 79 -22C95 -37 115 -66 124 -85C336 10 491 205 541 552L495 566L482 563H257C273 611 287 662 299 714H571V786H61V714H224C189 561 133 419 53 326C70 315 99 290 111 276C158 335 198 409 232 494H459C440 400 411 317 373 247C334 281 273 326 224 357Z"/><path id="gR6548" d="M169 600C137 523 87 441 35 384C50 374 77 350 88 339C140 399 197 494 234 581ZM334 573C379 519 426 445 445 396L505 431C485 479 436 551 390 603ZM201 816C230 779 259 729 273 694H58V626H513V694H286L341 719C327 753 295 804 263 841ZM138 360C178 321 220 276 259 230C203 133 129 55 38 -1C54 -13 81 -41 91 -55C176 3 248 79 306 173C349 118 386 65 408 23L468 70C441 118 395 179 344 240C372 296 396 358 415 424L344 437C331 387 314 341 294 297C261 333 226 369 194 400ZM657 588H824C804 454 774 340 726 246C685 328 654 420 633 518ZM645 841C616 663 566 492 484 383C500 370 525 341 535 326C555 354 573 385 590 419C615 330 646 248 684 176C625 89 546 22 440 -27C456 -40 482 -69 492 -83C588 -33 664 30 723 109C775 30 838 -35 914 -79C926 -60 950 -33 967 -19C886 23 820 90 766 174C831 284 871 420 897 588H954V658H677C692 713 704 771 715 830Z"/><path id="gR7387" d="M829 643C794 603 732 548 687 515L742 478C788 510 846 558 892 605ZM56 337 94 277C160 309 242 353 319 394L304 451C213 407 118 363 56 337ZM85 599C139 565 205 515 236 481L290 527C256 561 190 609 136 640ZM677 408C746 366 832 306 874 266L930 311C886 351 797 410 730 448ZM51 202V132H460V-80H540V132H950V202H540V284H460V202ZM435 828C450 805 468 776 481 750H71V681H438C408 633 374 592 361 579C346 561 331 550 317 547C324 530 334 498 338 483C353 489 375 494 490 503C442 454 399 415 379 399C345 371 319 352 297 349C305 330 315 297 318 284C339 293 374 298 636 324C648 304 658 286 664 270L724 297C703 343 652 415 607 466L551 443C568 424 585 401 600 379L423 364C511 434 599 522 679 615L618 650C597 622 573 594 550 567L421 560C454 595 487 637 516 681H941V750H569C555 779 531 818 508 847Z"/><path id="gR8ba1" d="M137 775C193 728 263 660 295 617L346 673C312 714 241 778 186 823ZM46 526V452H205V93C205 50 174 20 155 8C169 -7 189 -41 196 -61C212 -40 240 -18 429 116C421 130 409 162 404 182L281 98V526ZM626 837V508H372V431H626V-80H705V431H959V508H705V837Z"/><path id="gR7b97" d="M252 457H764V398H252ZM252 350H764V290H252ZM252 562H764V505H252ZM576 845C548 768 497 695 436 647C453 640 482 624 497 613H296L353 634C346 653 331 680 315 704H487V766H223C234 786 244 806 253 826L183 845C151 767 96 689 35 638C52 628 82 608 96 596C127 625 158 663 185 704H237C257 674 277 637 287 613H177V239H311V174L310 152H56V90H286C258 48 198 6 72 -25C88 -39 109 -65 119 -81C279 -35 346 28 372 90H642V-78H719V90H948V152H719V239H842V613H742L796 638C786 657 768 681 748 704H940V766H620C631 786 640 807 648 828ZM642 152H386L387 172V239H642ZM505 613C532 638 559 669 583 704H663C690 675 718 639 731 613Z"/><path id="gB77ff" d="M39 805V697H153C128 565 87 442 24 358C40 324 62 245 67 213C80 228 92 245 104 262V-42H205V33H399C389 13 378 -5 365 -23C394 -37 447 -72 469 -93C572 50 589 278 589 435V600H963V715H802L806 717C790 755 758 811 728 853L620 811C638 782 658 747 674 715H468V436C468 319 462 167 404 44V494H213C235 559 253 628 267 697H426V805ZM205 389H302V137H205Z"/><path id="gB77f3" d="M59 781V663H321C264 504 158 335 13 236C38 214 78 170 98 143C147 179 192 221 233 268V-90H354V-29H758V-86H886V443H357C397 514 432 589 459 663H943V781ZM354 86V328H758V86Z"/><path id="gB6536" d="M627 550H790C773 448 748 359 712 282C671 355 640 437 617 523ZM93 75C116 93 150 112 309 167V-90H428V414C453 387 486 344 500 321C518 342 536 366 551 392C578 313 609 239 647 173C594 103 526 47 439 5C463 -18 502 -68 516 -93C596 -49 662 5 716 71C766 7 825 -46 895 -86C913 -54 950 -9 977 13C902 50 838 105 785 172C844 276 884 401 910 550H969V664H663C678 718 689 773 699 830L575 850C552 689 505 536 428 438V835H309V283L203 251V742H85V257C85 216 66 196 48 185C66 159 86 105 93 75Z"/><path id="gB97f3" d="M652 663C642 625 624 577 608 540H401C393 575 373 625 350 663ZM413 841C424 820 436 794 444 769H106V663H327L229 644C246 613 261 573 270 540H50V433H951V540H738L788 643L692 663H905V769H581C571 799 555 834 538 861ZM295 114H711V43H295ZM295 205V272H711V205ZM174 371V-91H295V-57H711V-90H837V371Z"/><path id="gB673a" d="M488 792V468C488 317 476 121 343 -11C370 -26 417 -66 436 -88C581 57 604 298 604 468V679H729V78C729 -8 737 -32 756 -52C773 -70 802 -79 826 -79C842 -79 865 -79 882 -79C905 -79 928 -74 944 -61C961 -48 971 -29 977 1C983 30 987 101 988 155C959 165 925 184 902 203C902 143 900 95 899 73C897 51 896 42 892 37C889 33 884 31 879 31C874 31 867 31 862 31C858 31 854 33 851 37C848 41 848 55 848 82V792ZM193 850V643H45V530H178C146 409 86 275 20 195C39 165 66 116 77 83C121 139 161 221 193 311V-89H308V330C337 285 366 237 382 205L450 302C430 328 342 434 308 470V530H438V643H308V850Z"/></defs></svg>

<div id="tabbar">
  <div class="tab" style="left:0;width:174px;">
    <div class="abs" style="left:2px;top:13.5px;"><svg width="17.5" height="17.5" viewBox="0 0 16 16"><path fill="#3d7ca3" d="M7.9 0.5c-3.6 0-3.4 1.6-3.4 1.6v1.6h3.5v0.5H3.1S0.8 3.9 0.8 7.6s2 3.5 2 3.5h1.2V9.4s-0.1-2 2-2h3.4s1.9 0 1.9-1.9V2.4S11.6 0.5 7.9 0.5zM6 1.6a0.6 0.6 0 1 1 0 1.2 0.6 0.6 0 0 1 0-1.2z"/><path fill="#3d7ca3" d="M8.1 15.5c3.6 0 3.4-1.6 3.4-1.6v-1.6H8v-0.5h4.9s2.3 0.3 2.3-3.4-2-3.5-2-3.5H12v1.7s0.1 2-2 2H6.6s-1.9 0-1.9 1.9v3.1s-0.3 1.9 3.4 1.9zM10 14.4a0.6 0.6 0 1 1 0-1.2 0.6 0.6 0 0 1 0 1.2z"/></svg></div>
    <div class="tabtxt" style="left:28px;top:11px"><svg class="cj" width="78.0" height="28" fill="#6b6b6b"><use href="#gR5217" transform="translate(0.0 20) scale(0.0195 -0.0195)"/><use href="#gR51fa" transform="translate(19.5 20) scale(0.0195 -0.0195)"/><use href="#gR8d44" transform="translate(39.0 20) scale(0.0195 -0.0195)"/><use href="#gR6e90" transform="translate(58.5 20) scale(0.0195 -0.0195)"/></svg><span class="ui" style="color:#6b6b6b">.py</span></div>
  </div>
  <div class="tab" id="tab2" style="left:175px;width:193px;">
    <div class="abs" style="left:21px;top:13px;"><svg width="17.5" height="17.5" viewBox="0 0 16 16"><path fill="#3d7ca3" d="M7.9 0.5c-3.6 0-3.4 1.6-3.4 1.6v1.6h3.5v0.5H3.1S0.8 3.9 0.8 7.6s2 3.5 2 3.5h1.2V9.4s-0.1-2 2-2h3.4s1.9 0 1.9-1.9V2.4S11.6 0.5 7.9 0.5zM6 1.6a0.6 0.6 0 1 1 0 1.2 0.6 0.6 0 0 1 0-1.2z"/><path fill="#3d7ca3" d="M8.1 15.5c3.6 0 3.4-1.6 3.4-1.6v-1.6H8v-0.5h4.9s2.3 0.3 2.3-3.4-2-3.5-2-3.5H12v1.7s0.1 2-2 2H6.6s-1.9 0-1.9 1.9v3.1s-0.3 1.9 3.4 1.9zM10 14.4a0.6 0.6 0 1 1 0-1.2 0.6 0.6 0 0 1 0 1.2z"/></svg></div>
    <div class="tabtxt" style="left:48px;"><svg class="cj" width="78.0" height="28" fill="#333333"><use href="#gR6548" transform="translate(0.0 20) scale(0.0195 -0.0195)"/><use href="#gR7387" transform="translate(19.5 20) scale(0.0195 -0.0195)"/><use href="#gR8ba1" transform="translate(39.0 20) scale(0.0195 -0.0195)"/><use href="#gR7b97" transform="translate(58.5 20) scale(0.0195 -0.0195)"/></svg><span class="ui" style="color:#333333">.py</span></div>
    <svg class="abs" style="left:165px;top:16px" width="14" height="14"><path d="M1 1L13 13M13 1L1 13" stroke="#424242" stroke-width="1.4"/></svg>
  </div>
  <svg class="abs" style="left:1697px;top:13px" width="17" height="22"><path d="M1.5 2L15.5 11L1.5 20Z" fill="none" stroke="#3b3b3b" stroke-width="1.6" stroke-linejoin="round"/></svg>
</div>

<div class="abs" style="left:11px;top:57px;"><svg width="17.5" height="17.5" viewBox="0 0 16 16"><path fill="#3d7ca3" d="M7.9 0.5c-3.6 0-3.4 1.6-3.4 1.6v1.6h3.5v0.5H3.1S0.8 3.9 0.8 7.6s2 3.5 2 3.5h1.2V9.4s-0.1-2 2-2h3.4s1.9 0 1.9-1.9V2.4S11.6 0.5 7.9 0.5zM6 1.6a0.6 0.6 0 1 1 0 1.2 0.6 0.6 0 0 1 0-1.2z"/><path fill="#3d7ca3" d="M8.1 15.5c3.6 0 3.4-1.6 3.4-1.6v-1.6H8v-0.5h4.9s2.3 0.3 2.3-3.4-2-3.5-2-3.5H12v1.7s0.1 2-2 2H6.6s-1.9 0-1.9 1.9v3.1s-0.3 1.9 3.4 1.9zM10 14.4a0.6 0.6 0 1 1 0-1.2 0.6 0.6 0 0 1 0 1.2z"/></svg></div>
<div class="abs" style="left:37px;top:53px;white-space:nowrap;height:28px;"><svg class="cj" width="78.0" height="28" fill="#5f5f5f"><use href="#gR6548" transform="translate(0.0 20) scale(0.0195 -0.0195)"/><use href="#gR7387" transform="translate(19.5 20) scale(0.0195 -0.0195)"/><use href="#gR8ba1" transform="translate(39.0 20) scale(0.0195 -0.0195)"/><use href="#gR7b97" transform="translate(58.5 20) scale(0.0195 -0.0195)"/></svg><span class="ui" style="color:#5f5f5f">.py</span><svg style="vertical-align:top;margin-left:7px" width="12" height="28"><path d="M2 8L8 14L2 20" fill="none" stroke="#6b6b6b" stroke-width="1.3"/></svg><span class="ui" style="color:#6b6b6b;margin-left:5px">...</span></div>

<div id="curline"></div>
<div class="ln" style="top:81.75px">1</div>
<div class="cl" style="top:81.75px"><span style="color:#af00db;left:0.00px">import</span><span style="color:#267f99;left:80.85px">pyvisa</span><span style="color:#af00db;left:161.70px">as</span><span style="color:#267f99;left:196.35px">visa</span></div>
<div class="ln" style="top:110.25px">2</div>
<div class="cl" style="top:110.25px"><span style="color:#af00db;left:0.00px">import</span><span style="color:#267f99;left:80.85px">matplotlib</span><span style="color:#000000;left:196.35px">.</span><span style="color:#267f99;left:207.90px">pyplot</span><span style="color:#af00db;left:288.75px">as</span><span style="color:#267f99;left:323.40px">plt</span></div>
<div class="ln" style="top:138.75px">3</div>
<div class="cl" style="top:138.75px"><span style="color:#af00db;left:0.00px">import</span><span style="color:#8ec0cd;left:80.85px">time</span></div>
<div class="ln" style="top:167.25px">4</div>
<div class="cl" style="top:167.25px"></div>
<div class="ln" style="top:195.75px">5</div>
<div class="cl" style="top:195.75px"><span style="color:#008000;left:0.00px"># </span><svg class="cj" style="position:absolute;left:23.10px;top:0" width="63" height="28.5" fill="#008000"><use href="#gR521d" transform="translate(0 21.75) scale(0.021 -0.021)"/><use href="#gR59cb" transform="translate(21 21.75) scale(0.021 -0.021)"/><use href="#gR5316" transform="translate(42 21.75) scale(0.021 -0.021)"/></svg><span style="color:#008000;left:86.10px">VISA</span><svg class="cj" style="position:absolute;left:132.30px;top:0" width="105" height="28.5" fill="#008000"><use href="#gR8d44" transform="translate(0 21.75) scale(0.021 -0.021)"/><use href="#gR6e90" transform="translate(21 21.75) scale(0.021 -0.021)"/><use href="#gR7ba1" transform="translate(42 21.75) scale(0.021 -0.021)"/><use href="#gR7406" transform="translate(63 21.75) scale(0.021 -0.021)"/><use href="#gR5668" transform="translate(84 21.75) scale(0.021 -0.021)"/></svg></div>
<div class="ln" style="top:224.25px">6</div>
<div class="cl" style="top:224.25px"><span style="color:#001080;left:0.00px">rm</span><span style="color:#000000;left:23.10px"> = </span><span style="color:#267f99;left:57.75px">visa</span><span style="color:#000000;left:103.95px">.</span><span style="color:#267f99;left:115.50px">ResourceManager</span><span style="color:#0431fa;left:288.75px">()</span></div>
<div class="ln" style="top:252.75px">7</div>
<div class="cl" style="top:252.75px"><span style="color:#008000;left:0.00px"># </span><svg class="cj" style="position:absolute;left:23.10px;top:0" width="273" height="28.5" fill="#008000"><use href="#gR6253" transform="translate(0 21.75) scale(0.021 -0.021)"/><use href="#gR5f00" transform="translate(21 21.75) scale(0.021 -0.021)"/><use href="#gR4e0e" transform="translate(42 21.75) scale(0.021 -0.021)"/><use href="#gR7535" transform="translate(63 21.75) scale(0.021 -0.021)"/><use href="#gR6e90" transform="translate(84 21.75) scale(0.021 -0.021)"/><use href="#gR548c" transform="translate(105 21.75) scale(0.021 -0.021)"/><use href="#gR7535" transform="translate(126 21.75) scale(0.021 -0.021)"/><use href="#gR5b50" transform="translate(147 21.75) scale(0.021 -0.021)"/><use href="#gR8d1f" transform="translate(168 21.75) scale(0.021 -0.021)"/><use href="#gR8f7d" transform="translate(189 21.75) scale(0.021 -0.021)"/><use href="#gR7684" transform="translate(210 21.75) scale(0.021 -0.021)"/><use href="#gR8fde" transform="translate(231 21.75) scale(0.021 -0.021)"/><use href="#gR63a5" transform="translate(252 21.75) scale(0.021 -0.021)"/></svg></div>
<div class="ln" style="top:281.25px">8</div>
<div class="cl" style="top:281.25px"><span style="color:#001080;left:0.00px">psu</span><span style="color:#000000;left:34.65px"> = </span><span style="color:#001080;left:69.30px">rm</span><span style="color:#000000;left:92.40px">.</span><span style="color:#795e26;left:103.95px">open_resource</span><span style="color:#0431fa;left:254.10px">(</span><span style="color:#a31515;left:265.65px">&#x27;GPIB0::6::INSTR&#x27;</span><span style="color:#0431fa;left:462.00px">)</span><span style="color:#008000;left:473.55px">  # </span><svg class="cj" style="position:absolute;left:519.75px;top:0" width="63" height="28.5" fill="#008000"><use href="#gR7535" transform="translate(0 21.75) scale(0.021 -0.021)"/><use href="#gR6e90" transform="translate(21 21.75) scale(0.021 -0.021)"/><use href="#gR7684" transform="translate(42 21.75) scale(0.021 -0.021)"/></svg><span style="color:#008000;left:582.75px">GPIB</span><svg class="cj" style="position:absolute;left:628.95px;top:0" width="42" height="28.5" fill="#008000"><use href="#gR5730" transform="translate(0 21.75) scale(0.021 -0.021)"/><use href="#gR5740" transform="translate(21 21.75) scale(0.021 -0.021)"/></svg></div>
<div class="ln" style="top:309.75px">9</div>
<div class="cl" style="top:309.75px"><span style="color:#001080;left:0.00px">eload</span><span style="color:#000000;left:57.75px"> = </span><span style="color:#001080;left:92.40px">rm</span><span style="color:#000000;left:115.50px">.</span><span style="color:#795e26;left:127.05px">open_resource</span><span style="color:#0431fa;left:277.20px">(</span><span style="color:#a31515;left:288.75px">&#x27;GPIB0::5::INSTR&#x27;</span><span style="color:#0431fa;left:485.10px">)</span><span style="color:#008000;left:496.65px">  # </span><svg class="cj" style="position:absolute;left:542.85px;top:0" width="105" height="28.5" fill="#008000"><use href="#gR7535" transform="translate(0 21.75) scale(0.021 -0.021)"/><use href="#gR5b50" transform="translate(21 21.75) scale(0.021 -0.021)"/><use href="#gR8d1f" transform="translate(42 21.75) scale(0.021 -0.021)"/><use href="#gR8f7d" transform="translate(63 21.75) scale(0.021 -0.021)"/><use href="#gR7684" transform="translate(84 21.75) scale(0.021 -0.021)"/></svg><span style="color:#008000;left:647.85px">GPIB</span><svg class="cj" style="position:absolute;left:694.05px;top:0" width="42" height="28.5" fill="#008000"><use href="#gR5730" transform="translate(0 21.75) scale(0.021 -0.021)"/><use href="#gR5740" transform="translate(21 21.75) scale(0.021 -0.021)"/></svg></div>
<div class="ln" style="top:338.25px">10</div>
<div class="cl" style="top:338.25px"></div>
<div class="ln" style="top:366.75px">11</div>
<div class="cl" style="top:366.75px"><span style="color:#001080;left:0.00px">psu</span><span style="color:#000000;left:34.65px">.</span><span style="color:#795e26;left:46.20px">write</span><span style="color:#0431fa;left:103.95px">(</span><span style="color:#a31515;left:115.50px">&#x27;OUT 1&#x27;</span><span style="color:#0431fa;left:196.35px">)</span></div>
<div class="ln" style="top:395.25px">12</div>
<div class="cl" style="top:395.25px"><span style="color:#001080;left:0.00px">eload</span><span style="color:#000000;left:57.75px">.</span><span style="color:#795e26;left:69.30px">write</span><span style="color:#0431fa;left:127.05px">(</span><span style="color:#a31515;left:138.60px">&#x27;:OUTPut:STATe 1&#x27;</span><span style="color:#0431fa;left:334.95px">)</span></div>
<div class="ln" style="top:423.75px">13</div>
<div class="cl" style="top:423.75px"></div>
<div class="ln" style="top:452.25px">14</div>
<div class="cl" style="top:452.25px"><span style="color:#008000;left:0.00px"># </span><svg class="cj" style="position:absolute;left:23.10px;top:0" width="252" height="28.5" fill="#008000"><use href="#gR8bbe" transform="translate(0 21.75) scale(0.021 -0.021)"/><use href="#gR7f6e" transform="translate(21 21.75) scale(0.021 -0.021)"/><use href="#gR7535" transform="translate(42 21.75) scale(0.021 -0.021)"/><use href="#gR6e90" transform="translate(63 21.75) scale(0.021 -0.021)"/><use href="#gR7684" transform="translate(84 21.75) scale(0.021 -0.021)"/><use href="#gR6700" transform="translate(105 21.75) scale(0.021 -0.021)"/><use href="#gR5927" transform="translate(126 21.75) scale(0.021 -0.021)"/><use href="#gR8f93" transform="translate(147 21.75) scale(0.021 -0.021)"/><use href="#gR51fa" transform="translate(168 21.75) scale(0.021 -0.021)"/><use href="#gR7535" transform="translate(189 21.75) scale(0.021 -0.021)"/><use href="#gR6d41" transform="translate(210 21.75) scale(0.021 -0.021)"/><use href="#gR4e3a" transform="translate(231 21.75) scale(0.021 -0.021)"/></svg><span style="color:#008000;left:275.10px">5A</span></div>
<div class="ln" style="top:480.75px">15</div>
<div class="cl" style="top:480.75px"><span style="color:#001080;left:0.00px">psu</span><span style="color:#000000;left:34.65px">.</span><span style="color:#795e26;left:46.20px">write</span><span style="color:#0431fa;left:103.95px">(</span><span style="color:#a31515;left:115.50px">&#x27;ISET 5&#x27;</span><span style="color:#0431fa;left:207.90px">)</span><span style="color:#008000;left:219.45px">  # </span><svg class="cj" style="position:absolute;left:265.65px;top:0" width="420" height="28.5" fill="#008000"><use href="#gR5047" transform="translate(0 21.75) scale(0.021 -0.021)"/><use href="#gR8bbe" transform="translate(21 21.75) scale(0.021 -0.021)"/><use href="#gR7684" transform="translate(42 21.75) scale(0.021 -0.021)"/><use href="#gR547d" transform="translate(63 21.75) scale(0.021 -0.021)"/><use href="#gR4ee4" transform="translate(84 21.75) scale(0.021 -0.021)"/><use href="#gRff0c" transform="translate(105 21.75) scale(0.021 -0.021)"/><use href="#gR5b9e" transform="translate(126 21.75) scale(0.021 -0.021)"/><use href="#gR9645" transform="translate(147 21.75) scale(0.021 -0.021)"/><use href="#gR547d" transform="translate(168 21.75) scale(0.021 -0.021)"/><use href="#gR4ee4" transform="translate(189 21.75) scale(0.021 -0.021)"/><use href="#gR9700" transform="translate(210 21.75) scale(0.021 -0.021)"/><use href="#gR8981" transform="translate(231 21.75) scale(0.021 -0.021)"/><use href="#gR6839" transform="translate(252 21.75) scale(0.021 -0.021)"/><use href="#gR636e" transform="translate(273 21.75) scale(0.021 -0.021)"/><use href="#gR8bbe" transform="translate(294 21.75) scale(0.021 -0.021)"/><use href="#gR5907" transform="translate(315 21.75) scale(0.021 -0.021)"/><use href="#gR624b" transform="translate(336 21.75) scale(0.021 -0.021)"/><use href="#gR518c" transform="translate(357 21.75) scale(0.021 -0.021)"/><use href="#gR8c03" transform="translate(378 21.75) scale(0.021 -0.021)"/><use href="#gR6574" transform="translate(399 21.75) scale(0.021 -0.021)"/></svg></div>
<div class="ln" style="top:509.25px">16</div>
<div class="cl" style="top:509.25px"></div>
<div class="ln" style="top:537.75px">17</div>
<div class="cl" style="top:537.75px"><span style="color:#008000;left:0.00px"># </span><svg class="cj" style="position:absolute;left:23.10px;top:0" width="210" height="28.5" fill="#008000"><use href="#gR8bbe" transform="translate(0 21.75) scale(0.021 -0.021)"/><use href="#gR7f6e" transform="translate(21 21.75) scale(0.021 -0.021)"/><use href="#gR7535" transform="translate(42 21.75) scale(0.021 -0.021)"/><use href="#gR5b50" transform="translate(63 21.75) scale(0.021 -0.021)"/><use href="#gR8d1f" transform="translate(84 21.75) scale(0.021 -0.021)"/><use href="#gR8f7d" transform="translate(105 21.75) scale(0.021 -0.021)"/><use href="#gR7684" transform="translate(126 21.75) scale(0.021 -0.021)"/><use href="#gR7535" transform="translate(147 21.75) scale(0.021 -0.021)"/><use href="#gR538b" transform="translate(168 21.75) scale(0.021 -0.021)"/><use href="#gR4e3a" transform="translate(189 21.75) scale(0.021 -0.021)"/></svg><span style="color:#008000;left:233.10px">4V</span></div>
<div class="ln" style="top:566.25px">18</div>
<div class="cl" style="top:566.25px"><span style="color:#001080;left:0.00px">eload</span><span style="color:#000000;left:57.75px">.</span><span style="color:#795e26;left:69.30px">write</span><span style="color:#0431fa;left:127.05px">(</span><span style="color:#a31515;left:138.60px">&#x27;:SOURce:VOLTage 4&#x27;</span><span style="color:#0431fa;left:358.05px">)</span><span style="color:#008000;left:369.60px">  # </span><svg class="cj" style="position:absolute;left:415.80px;top:0" width="420" height="28.5" fill="#008000"><use href="#gR5047" transform="translate(0 21.75) scale(0.021 -0.021)"/><use href="#gR8bbe" transform="translate(21 21.75) scale(0.021 -0.021)"/><use href="#gR7684" transform="translate(42 21.75) scale(0.021 -0.021)"/><use href="#gR547d" transform="translate(63 21.75) scale(0.021 -0.021)"/><use href="#gR4ee4" transform="translate(84 21.75) scale(0.021 -0.021)"/><use href="#gRff0c" transform="translate(105 21.75) scale(0.021 -0.021)"/><use href="#gR5b9e" transform="translate(126 21.75) scale(0.021 -0.021)"/><use href="#gR9645" transform="translate(147 21.75) scale(0.021 -0.021)"/><use href="#gR547d" transform="translate(168 21.75) scale(0.021 -0.021)"/><use href="#gR4ee4" transform="translate(189 21.75) scale(0.021 -0.021)"/><use href="#gR9700" transform="translate(210 21.75) scale(0.021 -0.021)"/><use href="#gR8981" transform="translate(231 21.75) scale(0.021 -0.021)"/><use href="#gR6839" transform="translate(252 21.75) scale(0.021 -0.021)"/><use href="#gR636e" transform="translate(273 21.75) scale(0.021 -0.021)"/><use href="#gR8bbe" transform="translate(294 21.75) scale(0.021 -0.021)"/><use href="#gR5907" transform="translate(315 21.75) scale(0.021 -0.021)"/><use href="#gR624b" transform="translate(336 21.75) scale(0.021 -0.021)"/><use href="#gR518c" transform="translate(357 21.75) scale(0.021 -0.021)"/><use href="#gR8c03" transform="translate(378 21.75) scale(0.021 -0.021)"/><use href="#gR6574" transform="translate(399 21.75) scale(0.021 -0.021)"/></svg></div>
<div class="ln" style="top:594.75px">19</div>
<div class="cl" style="top:594.75px"></div>
<div class="ln" style="top:623.25px">20</div>
<div class="cl" style="top:623.25px"><span style="color:#008000;left:0.00px"># </span><svg class="cj" style="position:absolute;left:23.10px;top:0" width="336" height="28.5" fill="#008000"><use href="#gR8bbe" transform="translate(0 21.75) scale(0.021 -0.021)"/><use href="#gR7f6e" transform="translate(21 21.75) scale(0.021 -0.021)"/><use href="#gR57fa" transform="translate(42 21.75) scale(0.021 -0.021)"/><use href="#gR672c" transform="translate(63 21.75) scale(0.021 -0.021)"/><use href="#gR53c2" transform="translate(84 21.75) scale(0.021 -0.021)"/><use href="#gR6570" transform="translate(105 21.75) scale(0.021 -0.021)"/><use href="#gRff08" transform="translate(126 21.75) scale(0.021 -0.021)"/><use href="#gR6839" transform="translate(147 21.75) scale(0.021 -0.021)"/><use href="#gR636e" transform="translate(168 21.75) scale(0.021 -0.021)"/><use href="#gR5b9e" transform="translate(189 21.75) scale(0.021 -0.021)"/><use href="#gR9645" transform="translate(210 21.75) scale(0.021 -0.021)"/><use href="#gR60c5" transform="translate(231 21.75) scale(0.021 -0.021)"/><use href="#gR51b5" transform="translate(252 21.75) scale(0.021 -0.021)"/><use href="#gR8c03" transform="translate(273 21.75) scale(0.021 -0.021)"/><use href="#gR6574" transform="translate(294 21.75) scale(0.021 -0.021)"/><use href="#gRff09" transform="translate(315 21.75) scale(0.021 -0.021)"/></svg></div>
<div class="ln" style="top:651.75px">21</div>
<div class="cl" style="top:651.75px"><span style="color:#001080;left:0.00px">Vi_start</span><span style="color:#000000;left:92.40px"> = </span><span style="color:#098658;left:127.05px">3.2</span><span style="color:#008000;left:161.70px">  # </span><svg class="cj" style="position:absolute;left:207.90px;top:0" width="84" height="28.5" fill="#008000"><use href="#gR8d77" transform="translate(0 21.75) scale(0.021 -0.021)"/><use href="#gR59cb" transform="translate(21 21.75) scale(0.021 -0.021)"/><use href="#gR7535" transform="translate(42 21.75) scale(0.021 -0.021)"/><use href="#gR538b" transform="translate(63 21.75) scale(0.021 -0.021)"/></svg></div>
<div class="ln" style="top:680.25px">22</div>
<div class="cl" style="top:680.25px"><span style="color:#001080;left:0.00px">Vi_end</span><span style="color:#000000;left:69.30px"> = </span><span style="color:#098658;left:103.95px">4.2</span><span style="color:#008000;left:138.60px">  # </span><svg class="cj" style="position:absolute;left:184.80px;top:0" width="84" height="28.5" fill="#008000"><use href="#gR7ec8" transform="translate(0 21.75) scale(0.021 -0.021)"/><use href="#gR6b62" transform="translate(21 21.75) scale(0.021 -0.021)"/><use href="#gR7535" transform="translate(42 21.75) scale(0.021 -0.021)"/><use href="#gR538b" transform="translate(63 21.75) scale(0.021 -0.021)"/></svg></div>
<div class="ln" style="top:708.75px">23</div>
<div class="cl" style="top:708.75px"><span style="color:#001080;left:0.00px">Vi_step</span><span style="color:#000000;left:80.85px"> = </span><span style="color:#098658;left:115.50px">0.1</span><span style="color:#008000;left:150.15px">  # </span><svg class="cj" style="position:absolute;left:196.35px;top:0" width="105" height="28.5" fill="#008000"><use href="#gR7535" transform="translate(0 21.75) scale(0.021 -0.021)"/><use href="#gR538b" transform="translate(21 21.75) scale(0.021 -0.021)"/><use href="#gR6b65" transform="translate(42 21.75) scale(0.021 -0.021)"/><use href="#gR8fdb" transform="translate(63 21.75) scale(0.021 -0.021)"/><use href="#gR503c" transform="translate(84 21.75) scale(0.021 -0.021)"/></svg></div>
<div class="ln act" style="top:737.25px">24</div>
<div class="cl" style="top:737.25px"><span style="color:#001080;left:0.00px">Ii_start</span><span style="color:#000000;left:92.40px"> = </span><span style="color:#098658;left:127.05px">0.1</span><span style="color:#008000;left:161.70px">  # </span><svg class="cj" style="position:absolute;left:207.90px;top:0" width="84" height="28.5" fill="#008000"><use href="#gR8d77" transform="translate(0 21.75) scale(0.021 -0.021)"/><use href="#gR59cb" transform="translate(21 21.75) scale(0.021 -0.021)"/><use href="#gR7535" transform="translate(42 21.75) scale(0.021 -0.021)"/><use href="#gR6d41" transform="translate(63 21.75) scale(0.021 -0.021)"/></svg></div>
<div class="ln" style="top:765.75px">25</div>
<div class="cl" style="top:765.75px"><span style="color:#001080;left:0.00px">Ii_end</span><span style="color:#000000;left:69.30px"> = </span><span style="color:#098658;left:103.95px">1.0</span><span style="color:#008000;left:138.60px">  # </span><svg class="cj" style="position:absolute;left:184.80px;top:0" width="84" height="28.5" fill="#008000"><use href="#gR7ec8" transform="translate(0 21.75) scale(0.021 -0.021)"/><use href="#gR6b62" transform="translate(21 21.75) scale(0.021 -0.021)"/><use href="#gR7535" transform="translate(42 21.75) scale(0.021 -0.021)"/><use href="#gR6d41" transform="translate(63 21.75) scale(0.021 -0.021)"/></svg></div>
<div class="ln" style="top:794.25px">26</div>
<div class="cl" style="top:794.25px"><span style="color:#001080;left:0.00px">Ii_step</span><span style="color:#000000;left:80.85px"> = </span><span style="color:#098658;left:115.50px">0.1</span><span style="color:#008000;left:150.15px">  # </span><svg class="cj" style="position:absolute;left:196.35px;top:0" width="105" height="28.5" fill="#008000"><use href="#gR7535" transform="translate(0 21.75) scale(0.021 -0.021)"/><use href="#gR6d41" transform="translate(21 21.75) scale(0.021 -0.021)"/><use href="#gR6b65" transform="translate(42 21.75) scale(0.021 -0.021)"/><use href="#gR8fdb" transform="translate(63 21.75) scale(0.021 -0.021)"/><use href="#gR503c" transform="translate(84 21.75) scale(0.021 -0.021)"/></svg></div>
<div class="ln" style="top:822.75px">27</div>
<div class="cl" style="top:822.75px"><span style="color:#008000;left:0.00px"># Delay = 1  # </span><svg class="cj" style="position:absolute;left:173.25px;top:0" width="42" height="28.5" fill="#008000"><use href="#gR5ef6" transform="translate(0 21.75) scale(0.021 -0.021)"/><use href="#gR65f6" transform="translate(21 21.75) scale(0.021 -0.021)"/></svg></div>
<div class="ln" style="top:851.25px">28</div>
<div class="cl" style="top:851.25px"></div>

<!-- minimap -->
<div class="abs" style="left:1705px;top:80px;width:9px;height:168px;overflow:hidden;opacity:0.8">
<div class="abs" style="left:0px;top:0.0px;width:4px;height:2px;background:#c77de0"></div>
<div class="abs" style="left:5px;top:0.0px;width:4px;height:2px;background:#7fb7c9"></div>
<div class="abs" style="left:0px;top:2.3px;width:4px;height:2px;background:#c77de0"></div>
<div class="abs" style="left:5px;top:2.3px;width:4px;height:2px;background:#7fb7c9"></div>
<div class="abs" style="left:0px;top:4.7px;width:4px;height:2px;background:#c77de0"></div>
<div class="abs" style="left:5px;top:4.7px;width:4px;height:2px;background:#7fb7c9"></div>
<div class="abs" style="left:0px;top:9.3px;width:9px;height:2px;background:#5cb85c"></div>
<div class="abs" style="left:0px;top:11.7px;width:9px;height:2px;background:#7b86c8"></div>
<div class="abs" style="left:0px;top:14.0px;width:9px;height:2px;background:#5cb85c"></div>
<div class="abs" style="left:0px;top:16.3px;width:9px;height:2px;background:#7b86c8"></div>
<div class="abs" style="left:0px;top:18.6px;width:9px;height:2px;background:#7b86c8"></div>
<div class="abs" style="left:0px;top:23.3px;width:9px;height:2px;background:#7b86c8"></div>
<div class="abs" style="left:0px;top:25.6px;width:9px;height:2px;background:#7b86c8"></div>
<div class="abs" style="left:0px;top:30.3px;width:9px;height:2px;background:#5cb85c"></div>
<div class="abs" style="left:0px;top:32.6px;width:9px;height:2px;background:#7b86c8"></div>
<div class="abs" style="left:0px;top:37.3px;width:9px;height:2px;background:#5cb85c"></div>
<div class="abs" style="left:0px;top:39.6px;width:9px;height:2px;background:#7b86c8"></div>
<div class="abs" style="left:0px;top:44.3px;width:9px;height:2px;background:#5cb85c"></div>
<div class="abs" style="left:0px;top:46.6px;width:9px;height:2px;background:#7b86c8"></div>
<div class="abs" style="left:0px;top:48.9px;width:9px;height:2px;background:#7b86c8"></div>
<div class="abs" style="left:0px;top:51.3px;width:9px;height:2px;background:#7b86c8"></div>
<div class="abs" style="left:0px;top:53.6px;width:9px;height:2px;background:#7b86c8"></div>
<div class="abs" style="left:0px;top:55.9px;width:9px;height:2px;background:#7b86c8"></div>
<div class="abs" style="left:0px;top:58.2px;width:9px;height:2px;background:#7b86c8"></div>
<div class="abs" style="left:0px;top:60.6px;width:9px;height:2px;background:#5cb85c"></div>
<div class="abs" style="left:0px;top:65.2px;width:9px;height:2px;background:#5cb85c"></div>
<div class="abs" style="left:0px;top:67.6px;width:9px;height:2px;background:#7b86c8"></div>
<div class="abs" style="left:0px;top:72.2px;width:3px;height:2px;background:#c77de0"></div>
<div class="abs" style="left:4px;top:72.2px;width:5px;height:2px;background:#7b86c8"></div>
<div class="abs" style="left:2px;top:74.6px;width:7px;height:2px;background:#7b86c8"></div>
<div class="abs" style="left:2px;top:76.9px;width:7px;height:2px;background:#5cb85c"></div>
<div class="abs" style="left:2px;top:79.2px;width:7px;height:2px;background:#7b86c8"></div>
<div class="abs" style="left:2px;top:81.5px;width:7px;height:2px;background:#5cb85c"></div>
<div class="abs" style="left:2px;top:86.2px;width:7px;height:2px;background:#5cb85c"></div>
<div class="abs" style="left:2px;top:88.5px;width:3px;height:2px;background:#c77de0"></div>
<div class="abs" style="left:6px;top:88.5px;width:3px;height:2px;background:#7b86c8"></div>
<div class="abs" style="left:6px;top:90.9px;width:3px;height:2px;background:#7b86c8"></div>
<div class="abs" style="left:6px;top:93.2px;width:3px;height:2px;background:#7b86c8"></div>
<div class="abs" style="left:6px;top:97.9px;width:3px;height:2px;background:#7b86c8"></div>
<div class="abs" style="left:6px;top:100.2px;width:3px;height:2px;background:#7b86c8"></div>
<div class="abs" style="left:6px;top:102.5px;width:3px;height:2px;background:#7b86c8"></div>
<div class="abs" style="left:6px;top:107.2px;width:3px;height:2px;background:#7b86c8"></div>
<div class="abs" style="left:6px;top:109.5px;width:3px;height:2px;background:#7b86c8"></div>
<div class="abs" style="left:6px;top:114.2px;width:3px;height:2px;background:#7b86c8"></div>
<div class="abs" style="left:6px;top:116.5px;width:3px;height:2px;background:#7b86c8"></div>
<div class="abs" style="left:6px;top:121.2px;width:3px;height:2px;background:#7b86c8"></div>
<div class="abs" style="left:6px;top:123.5px;width:3px;height:2px;background:#7b86c8"></div>
<div class="abs" style="left:2px;top:128.1px;width:7px;height:2px;background:#7b86c8"></div>
<div class="abs" style="left:0px;top:132.8px;width:9px;height:2px;background:#5cb85c"></div>
<div class="abs" style="left:0px;top:135.1px;width:9px;height:2px;background:#7b86c8"></div>
<div class="abs" style="left:0px;top:137.5px;width:9px;height:2px;background:#7b86c8"></div>
<div class="abs" style="left:0px;top:142.1px;width:9px;height:2px;background:#7b86c8"></div>
<div class="abs" style="left:0px;top:144.5px;width:9px;height:2px;background:#7b86c8"></div>
<div class="abs" style="left:0px;top:146.8px;width:9px;height:2px;background:#c9a27a"></div>
<div class="abs" style="left:0px;top:151.5px;width:9px;height:2px;background:#5cb85c"></div>
<div class="abs" style="left:0px;top:153.8px;width:9px;height:2px;background:#7b86c8"></div>
<div class="abs" style="left:0px;top:156.1px;width:9px;height:2px;background:#8fb7a0"></div>
<div class="abs" style="left:0px;top:158.4px;width:9px;height:2px;background:#8fb7a0"></div>
<div class="abs" style="left:0px;top:160.8px;width:9px;height:2px;background:#8fb7a0"></div>
<div class="abs" style="left:0px;top:163.1px;width:9px;height:2px;background:#8fb7a0"></div>
<div class="abs" style="left:0px;top:165.4px;width:9px;height:2px;background:#8fb7a0"></div>
<div class="abs" style="left:0px;top:167.8px;width:9px;height:2px;background:#8fb7a0"></div>
</div>
<div id="term">
</div>
<div class="abs" style="left:1658px;top:1036px;width:1px;height:689px;background:#e5e5e5"></div>
<div class="abs" style="left:1660px;top:1201px;width:54px;height:33px;background:#e4e6f1"></div>
<div class="abs" style="left:1659px;top:1201px;width:2px;height:33px;background:#005fb8"></div>
<svg class="abs" style="left:1656px;top:1000px" width="42" height="21"><path d="M1 10.5H20M10.5 1V20" stroke="#3b3b3b" stroke-width="1.3"/><path d="M31 9L35.5 13.5L40 9" fill="none" stroke="#3b3b3b" stroke-width="1.2"/></svg>
<div class="ticon" style="top:1043px"><svg width="21" height="21" viewBox="0 0 21 21"><rect x="0.9" y="0.9" width="19.2" height="19.2" rx="2" fill="none" stroke="#424242" stroke-width="1.4"/><path d="M5 6.5l4.5 3.8L5 14.1" fill="none" stroke="#424242" stroke-width="1.4"/><path d="M11 15h5" stroke="#424242" stroke-width="1.6"/></svg><span class="tp">P</span></div><div class="ticon" style="top:1076px"><svg width="21" height="21" viewBox="0 0 21 21"><rect x="0.9" y="0.9" width="19.2" height="19.2" rx="2" fill="none" stroke="#424242" stroke-width="1.4"/><path d="M5 6.5l4.5 3.8L5 14.1" fill="none" stroke="#424242" stroke-width="1.4"/><path d="M11 15h5" stroke="#424242" stroke-width="1.6"/></svg><span class="tp">P</span></div><div class="ticon" style="top:1109px"><svg width="21" height="21" viewBox="0 0 21 21"><rect x="0.9" y="0.9" width="19.2" height="19.2" rx="2" fill="none" stroke="#424242" stroke-width="1.4"/><path d="M5 6.5l4.5 3.8L5 14.1" fill="none" stroke="#424242" stroke-width="1.4"/><path d="M11 15h5" stroke="#424242" stroke-width="1.6"/></svg><span class="tp">P</span></div><div class="ticon" style="top:1142px"><svg width="21" height="21" viewBox="0 0 21 21"><rect x="0.9" y="0.9" width="19.2" height="19.2" rx="2" fill="none" stroke="#424242" stroke-width="1.4"/><path d="M5 6.5l4.5 3.8L5 14.1" fill="none" stroke="#424242" stroke-width="1.4"/><path d="M11 15h5" stroke="#424242" stroke-width="1.6"/></svg><span class="tp">P</span></div><div class="ticon" style="top:1175px"><svg width="21" height="21" viewBox="0 0 21 21"><rect x="0.9" y="0.9" width="19.2" height="19.2" rx="2" fill="none" stroke="#424242" stroke-width="1.4"/><path d="M5 6.5l4.5 3.8L5 14.1" fill="none" stroke="#424242" stroke-width="1.4"/><path d="M11 15h5" stroke="#424242" stroke-width="1.6"/></svg><span class="tp">P</span></div><div class="ticon" style="top:1208px"><svg width="21" height="21" viewBox="0 0 21 21"><rect x="0.9" y="0.9" width="19.2" height="19.2" rx="2" fill="none" stroke="#424242" stroke-width="1.4"/><path d="M5 6.5l4.5 3.8L5 14.1" fill="none" stroke="#424242" stroke-width="1.4"/><path d="M11 15h5" stroke="#424242" stroke-width="1.6"/></svg><span class="tp">P</span></div>
<div class="tl" style="top:1109px">e-packages\</div><div class="tl" style="top:1187px">e-packages\</div><div class="tl" style="top:1265px">1504, in ma</div><div class="tl" style="top:1369px">leowo/AppDa</div><div class="tl" style="top:1551px">leowo/AppDa</div><div class="tl" style="top:1603px">leowo/AppDa</div>
<div class="abs" style="left:1653px;top:1054px;width:5px;height:5px;background:#e51400"></div>
<div class="abs" style="left:1653px;top:1215px;width:5px;height:9px;background:#e51400"></div>
<div class="abs" style="left:1653px;top:1418px;width:5px;height:9px;background:#e51400"></div>
<div class="abs" style="left:1644px;top:1418px;width:5px;height:9px;background:#c0c0c0"></div>
<div class="abs" style="left:1653px;top:1518px;width:5px;height:9px;background:#e51400"></div>
<div class="abs" style="left:1653px;top:1623px;width:5px;height:9px;background:#e51400"></div>
<div class="abs" style="left:1643px;top:1656px;width:5px;height:8px;background:#1a85d0"></div>
<!-- status -->
<div class="abs" style="left:1500px;top:1681px;width:214px;height:1px;background:#e0e0e0"></div>
<div class="abs" style="left:1505px;top:1687px;font-size:19px;color:#6b6b6b;white-space:pre;font-family:'Liberation Sans',sans-serif">n   3.</div>
<div class="abs" style="left:1500px;top:1714px;width:214px;height:11px;background:#e8e8e8"></div>
<!-- left strip markers -->
<div class="abs" style="left:-5px;top:1451px;width:9px;height:9px;border:1.5px solid #d04a10;border-radius:50%"></div>
<div class="abs" style="left:-6px;top:1608px;width:11px;height:11px;background:#1a8ad6;border-radius:50%"></div>
<div class="abs" style="left:-6px;top:1633px;width:9px;height:9px;border:1.2px solid #999;border-radius:50%"></div>
<div class="abs" style="left:0;top:1714px;width:6px;height:11px;background:#000"></div>
<div class="abs" style="left:0;top:1682px;width:6px;height:1px;background:#d5d5d5"></div>

<!-- figure window -->
<div id="win">
  <svg class="abs" style="left:10px;top:8.3px" width="26" height="26" viewBox="0 0 26 26">
    <circle cx="13" cy="13" r="11.8" fill="#fff" stroke="#a0a0a0" stroke-width="0.9"/>
    <path d="M6.5 4.5L10 3.5L13 12.5Z" fill="#d86a10" stroke="#7a3a00" stroke-width="0.4"/>
    <path d="M3.5 9.5L4 16L13 12.5Z" fill="#f3d820" stroke="#8a7a00" stroke-width="0.4"/>
    <path d="M15.5 6L17.5 7L13 12.5Z" fill="#c8d820" stroke="#5a8a00" stroke-width="0.4"/>
    <path d="M11.5 17.5L13.5 17.5L13 12.5Z" fill="#6ccc40"/>
    <path d="M13 12.5L20 19L18.5 20.5Z" fill="#d86a10" stroke="#7a3a00" stroke-width="0.4"/>
    <circle cx="13" cy="12.5" r="1.3" fill="#111"/>
  </svg>
  <div class="abs" style="left:40.5px;top:6.5px;font-size:20px;letter-spacing:-0.42px;line-height:28px;color:#000;white-space:nowrap">Figure 1</div>
  <svg class="abs" style="left:1317px;top:13.5px" width="16" height="16"><path d="M1 7.8H15.5" stroke="#000" stroke-width="1.4"/></svg>
  <svg class="abs" style="left:1386.5px;top:14px" width="16" height="16"><rect x="1.2" y="0.9" width="13.6" height="13.6" fill="none" stroke="#000" stroke-width="1.4"/></svg>
  <svg class="abs" style="left:1457.5px;top:13.2px" width="16" height="16"><path d="M1 1L15.5 15.5M15.5 1L1 15.5" stroke="#000" stroke-width="1.4"/></svg>
  <div id="plot" class="abs" style="left:0;top:44px;width:1500px;height:750px"><svg width="1500" height="750" viewBox="0 0 720 360" version="1.1"> <defs>  </defs> <g id="figure_1"> <g id="patch_1"> <path d="M 0 360 L 720 360 L 720 0 L 0 0 z " style="fill: #ffffff"/> </g> <g id="axes_1"> <g id="patch_2"> <path d="M 90 320.4 L 536.4 320.4 L 536.4 43.2 L 90 43.2 z " style="fill: #ffffff"/> </g> <g id="PathCollection_1"> <defs> <path id="C0_0_623b9ded61" d="M 0 3 C 0.795609 3 1.55874 2.683901 2.12132 2.12132 C 2.683901 1.55874 3 0.795609 3 -0 C 3 -0.795609 2.683901 -1.55874 2.12132 -2.12132 C 1.55874 -2.683901 0.795609 -3 0 -3 C -0.795609 -3 -1.55874 -2.683901 -2.12132 -2.12132 C -2.683901 -1.55874 -3 -0.795609 -3 0 C -3 0.795609 -2.683901 1.55874 -2.12132 2.12132 C -1.55874 2.683901 -0.795609 3 0 3 z "/> </defs> <g clip-path="url(#paf30b0d2f5)"> <use href="#C0_0_623b9ded61" x="110.29" y="307.68" style="fill: #440154; stroke: #440154"/> </g> <g clip-path="url(#paf30b0d2f5)"> <use href="#C0_0_623b9ded61" x="110.29" y="118.17" style="fill: #482878; stroke: #482878"/> </g> <g clip-path="url(#paf30b0d2f5)"> <use href="#C0_0_623b9ded61" x="110.29" y="107.28" style="fill: #3e4989; stroke: #3e4989"/> </g> <g clip-path="url(#paf30b0d2f5)"> <use href="#C0_0_623b9ded61" x="110.29" y="93.69" style="fill: #31688e; stroke: #31688e"/> </g> <g clip-path="url(#paf30b0d2f5)"> <use href="#C0_0_623b9ded61" x="110.29" y="79.24" style="fill: #26828e; stroke: #26828e"/> </g> <g clip-path="url(#paf30b0d2f5)"> <use href="#C0_0_623b9ded61" x="110.29" y="75.45" style="fill: #1f9e89; stroke: #1f9e89"/> </g> <g clip-path="url(#paf30b0d2f5)"> <use href="#C0_0_623b9ded61" x="110.29" y="69.12" style="fill: #35b779; stroke: #35b779"/> </g> <g clip-path="url(#paf30b0d2f5)"> <use href="#C0_0_623b9ded61" x="110.29" y="68.16" style="fill: #6ece58; stroke: #6ece58"/> </g> <g clip-path="url(#paf30b0d2f5)"> <use href="#C0_0_623b9ded61" x="110.29" y="67.2" style="fill: #b5de2b; stroke: #b5de2b"/> </g> <g clip-path="url(#paf30b0d2f5)"> <use href="#C0_0_623b9ded61" x="110.29" y="67.68" style="fill: #fde725; stroke: #fde725"/> </g> <g clip-path="url(#paf30b0d2f5)"> <use href="#C0_0_623b9ded61" x="150.87" y="261.36" style="fill: #440154; stroke: #440154"/> </g> <g clip-path="url(#paf30b0d2f5)"> <use href="#C0_0_623b9ded61" x="150.87" y="120.14" style="fill: #482878; stroke: #482878"/> </g> <g clip-path="url(#paf30b0d2f5)"> <use href="#C0_0_623b9ded61" x="150.87" y="115.44" style="fill: #3e4989; stroke: #3e4989"/> </g> <g clip-path="url(#paf30b0d2f5)"> <use href="#C0_0_623b9ded61" x="150.87" y="90.81" style="fill: #31688e; stroke: #31688e"/> </g> <g clip-path="url(#paf30b0d2f5)"> <use href="#C0_0_623b9ded61" x="150.87" y="79.00" style="fill: #26828e; stroke: #26828e"/> </g> <g clip-path="url(#paf30b0d2f5)"> <use href="#C0_0_623b9ded61" x="150.87" y="72.62" style="fill: #1f9e89; stroke: #1f9e89"/> </g> <g clip-path="url(#paf30b0d2f5)"> <use href="#C0_0_623b9ded61" x="150.87" y="67.68" style="fill: #35b779; stroke: #35b779"/> </g> <g clip-path="url(#paf30b0d2f5)"> <use href="#C0_0_623b9ded61" x="150.87" y="67.2" style="fill: #6ece58; stroke: #6ece58"/> </g> <g clip-path="url(#paf30b0d2f5)"> <use href="#C0_0_623b9ded61" x="150.87" y="66" style="fill: #b5de2b; stroke: #b5de2b"/> </g> <g clip-path="url(#paf30b0d2f5)"> <use href="#C0_0_623b9ded61" x="150.87" y="67.68" style="fill: #fde725; stroke: #fde725"/> </g> <g clip-path="url(#paf30b0d2f5)"> <use href="#C0_0_623b9ded61" x="191.45" y="286.32" style="fill: #440154; stroke: #440154"/> </g> <g clip-path="url(#paf30b0d2f5)"> <use href="#C0_0_623b9ded61" x="191.45" y="125.61" style="fill: #482878; stroke: #482878"/> </g> <g clip-path="url(#paf30b0d2f5)"> <use href="#C0_0_623b9ded61" x="191.45" y="108.09" style="fill: #3e4989; stroke: #3e4989"/> </g> <g clip-path="url(#paf30b0d2f5)"> <use href="#C0_0_623b9ded61" x="191.45" y="90.38" style="fill: #31688e; stroke: #31688e"/> </g> <g clip-path="url(#paf30b0d2f5)"> <use href="#C0_0_623b9ded61" x="191.45" y="79.00" style="fill: #26828e; stroke: #26828e"/> </g> <g clip-path="url(#paf30b0d2f5)"> <use href="#C0_0_623b9ded61" x="191.45" y="72.86" style="fill: #1f9e89; stroke: #1f9e89"/> </g> <g clip-path="url(#paf30b0d2f5)"> <use href="#C0_0_623b9ded61" x="191.45" y="69.12" style="fill: #35b779; stroke: #35b779"/> </g> <g clip-path="url(#paf30b0d2f5)"> <use href="#C0_0_623b9ded61" x="191.45" y="68.64" style="fill: #6ece58; stroke: #6ece58"/> </g> <g clip-path="url(#paf30b0d2f5)"> <use href="#C0_0_623b9ded61" x="191.45" y="67.68" style="fill: #b5de2b; stroke: #b5de2b"/> </g> <g clip-path="url(#paf30b0d2f5)"> <use href="#C0_0_623b9ded61" x="191.45" y="64.8" style="fill: #fde725; stroke: #fde725"/> </g> <g clip-path="url(#paf30b0d2f5)"> <use href="#C0_0_623b9ded61" x="232.03" y="247.77" style="fill: #440154; stroke: #440154"/> </g> <g clip-path="url(#paf30b0d2f5)"> <use href="#C0_0_623b9ded61" x="232.03" y="116.64" style="fill: #482878; stroke: #482878"/> </g> <g clip-path="url(#paf30b0d2f5)"> <use href="#C0_0_623b9ded61" x="232.03" y="107.61" style="fill: #3e4989; stroke: #3e4989"/> </g> <g clip-path="url(#paf30b0d2f5)"> <use href="#C0_0_623b9ded61" x="232.03" y="89.90" style="fill: #31688e; stroke: #31688e"/> </g> <g clip-path="url(#paf30b0d2f5)"> <use href="#C0_0_623b9ded61" x="232.03" y="79.24" style="fill: #26828e; stroke: #26828e"/> </g> <g clip-path="url(#paf30b0d2f5)"> <use href="#C0_0_623b9ded61" x="232.03" y="74.73" style="fill: #1f9e89; stroke: #1f9e89"/> </g> <g clip-path="url(#paf30b0d2f5)"> <use href="#C0_0_623b9ded61" x="232.03" y="68.64" style="fill: #35b779; stroke: #35b779"/> </g> <g clip-path="url(#paf30b0d2f5)"> <use href="#C0_0_623b9ded61" x="232.03" y="67.68" style="fill: #6ece58; stroke: #6ece58"/> </g> <g clip-path="url(#paf30b0d2f5)"> <use href="#C0_0_623b9ded61" x="232.03" y="64.8" style="fill: #b5de2b; stroke: #b5de2b"/> </g> <g clip-path="url(#paf30b0d2f5)"> <use href="#C0_0_623b9ded61" x="232.03" y="63.16" style="fill: #fde725; stroke: #fde725"/> </g> <g clip-path="url(#paf30b0d2f5)"> <use href="#C0_0_623b9ded61" x="272.61" y="248.83" style="fill: #440154; stroke: #440154"/> </g> <g clip-path="url(#paf30b0d2f5)"> <use href="#C0_0_623b9ded61" x="272.61" y="114.24" style="fill: #482878; stroke: #482878"/> </g> <g clip-path="url(#paf30b0d2f5)"> <use href="#C0_0_623b9ded61" x="272.61" y="102.19" style="fill: #3e4989; stroke: #3e4989"/> </g> <g clip-path="url(#paf30b0d2f5)"> <use href="#C0_0_623b9ded61" x="272.61" y="90.38" style="fill: #31688e; stroke: #31688e"/> </g> <g clip-path="url(#paf30b0d2f5)"> <use href="#C0_0_623b9ded61" x="272.61" y="82.32" style="fill: #26828e; stroke: #26828e"/> </g> <g clip-path="url(#paf30b0d2f5)"> <use href="#C0_0_623b9ded61" x="272.61" y="71.90" style="fill: #1f9e89; stroke: #1f9e89"/> </g> <g clip-path="url(#paf30b0d2f5)"> <use href="#C0_0_623b9ded61" x="272.61" y="69.07" style="fill: #35b779; stroke: #35b779"/> </g> <g clip-path="url(#paf30b0d2f5)"> <use href="#C0_0_623b9ded61" x="272.61" y="64.12" style="fill: #6ece58; stroke: #6ece58"/> </g> <g clip-path="url(#paf30b0d2f5)"> <use href="#C0_0_623b9ded61" x="272.61" y="62.88" style="fill: #b5de2b; stroke: #b5de2b"/> </g> <g clip-path="url(#paf30b0d2f5)"> <use href="#C0_0_623b9ded61" x="272.61" y="61.48" style="fill: #fde725; stroke: #fde725"/> </g> <g clip-path="url(#paf30b0d2f5)"> <use href="#C0_0_623b9ded61" x="313.2" y="249.12" style="fill: #440154; stroke: #440154"/> </g> <g clip-path="url(#paf30b0d2f5)"> <use href="#C0_0_623b9ded61" x="313.2" y="110.44" style="fill: #482878; stroke: #482878"/> </g> <g clip-path="url(#paf30b0d2f5)"> <use href="#C0_0_623b9ded61" x="313.2" y="96.04" style="fill: #3e4989; stroke: #3e4989"/> </g> <g clip-path="url(#paf30b0d2f5)"> <use href="#C0_0_623b9ded61" x="313.2" y="94.36" style="fill: #31688e; stroke: #31688e"/> </g> <g clip-path="url(#paf30b0d2f5)"> <use href="#C0_0_623b9ded61" x="313.2" y="79.96" style="fill: #26828e; stroke: #26828e"/> </g> <g clip-path="url(#paf30b0d2f5)"> <use href="#C0_0_623b9ded61" x="313.2" y="71.90" style="fill: #1f9e89; stroke: #1f9e89"/> </g> <g clip-path="url(#paf30b0d2f5)"> <use href="#C0_0_623b9ded61" x="313.2" y="67.2" style="fill: #35b779; stroke: #35b779"/> </g> <g clip-path="url(#paf30b0d2f5)"> <use href="#C0_0_623b9ded61" x="313.2" y="64.32" style="fill: #6ece58; stroke: #6ece58"/> </g> <g clip-path="url(#paf30b0d2f5)"> <use href="#C0_0_623b9ded61" x="313.2" y="61.96" style="fill: #b5de2b; stroke: #b5de2b"/> </g> <g clip-path="url(#paf30b0d2f5)"> <use href="#C0_0_623b9ded61" x="313.2" y="59.85" style="fill: #fde725; stroke: #fde725"/> </g> <g clip-path="url(#paf30b0d2f5)"> <use href="#C0_0_623b9ded61" x="353.78" y="247.00" style="fill: #440154; stroke: #440154"/> </g> <g clip-path="url(#paf30b0d2f5)"> <use href="#C0_0_623b9ded61" x="353.78" y="105.02" style="fill: #482878; stroke: #482878"/> </g> <g clip-path="url(#paf30b0d2f5)"> <use href="#C0_0_623b9ded61" x="353.78" y="98.88" style="fill: #3e4989; stroke: #3e4989"/> </g> <g clip-path="url(#paf30b0d2f5)"> <use href="#C0_0_623b9ded61" x="353.78" y="89.66" style="fill: #31688e; stroke: #31688e"/> </g> <g clip-path="url(#paf30b0d2f5)"> <use href="#C0_0_623b9ded61" x="353.78" y="79.96" style="fill: #26828e; stroke: #26828e"/> </g> <g clip-path="url(#paf30b0d2f5)"> <use href="#C0_0_623b9ded61" x="353.78" y="72.86" style="fill: #1f9e89; stroke: #1f9e89"/> </g> <g clip-path="url(#paf30b0d2f5)"> <use href="#C0_0_623b9ded61" x="353.78" y="67.87" style="fill: #35b779; stroke: #35b779"/> </g> <g clip-path="url(#paf30b0d2f5)"> <use href="#C0_0_623b9ded61" x="353.78" y="64.8" style="fill: #6ece58; stroke: #6ece58"/> </g> <g clip-path="url(#paf30b0d2f5)"> <use href="#C0_0_623b9ded61" x="353.78" y="63.36" style="fill: #b5de2b; stroke: #b5de2b"/> </g> <g clip-path="url(#paf30b0d2f5)"> <use href="#C0_0_623b9ded61" x="353.78" y="62.20" style="fill: #fde725; stroke: #fde725"/> </g> <g clip-path="url(#paf30b0d2f5)"> <use href="#C0_0_623b9ded61" x="394.36" y="269.42" style="fill: #440154; stroke: #440154"/> </g> <g clip-path="url(#paf30b0d2f5)"> <use href="#C0_0_623b9ded61" x="394.36" y="110.92" style="fill: #482878; stroke: #482878"/> </g> <g clip-path="url(#paf30b0d2f5)"> <use href="#C0_0_623b9ded61" x="394.36" y="97.24" style="fill: #3e4989; stroke: #3e4989"/> </g> <g clip-path="url(#paf30b0d2f5)"> <use href="#C0_0_623b9ded61" x="394.36" y="90.14" style="fill: #31688e; stroke: #31688e"/> </g> <g clip-path="url(#paf30b0d2f5)"> <use href="#C0_0_623b9ded61" x="394.36" y="80.20" style="fill: #26828e; stroke: #26828e"/> </g> <g clip-path="url(#paf30b0d2f5)"> <use href="#C0_0_623b9ded61" x="394.36" y="70.99" style="fill: #1f9e89; stroke: #1f9e89"/> </g> <g clip-path="url(#paf30b0d2f5)"> <use href="#C0_0_623b9ded61" x="394.36" y="66.72" style="fill: #35b779; stroke: #35b779"/> </g> <g clip-path="url(#paf30b0d2f5)"> <use href="#C0_0_623b9ded61" x="394.36" y="64.32" style="fill: #6ece58; stroke: #6ece58"/> </g> <g clip-path="url(#paf30b0d2f5)"> <use href="#C0_0_623b9ded61" x="394.36" y="61.96" style="fill: #b5de2b; stroke: #b5de2b"/> </g> <g clip-path="url(#paf30b0d2f5)"> <use href="#C0_0_623b9ded61" x="394.36" y="58.17" style="fill: #fde725; stroke: #fde725"/> </g> <g clip-path="url(#paf30b0d2f5)"> <use href="#C0_0_623b9ded61" x="434.94" y="158.59" style="fill: #440154; stroke: #440154"/> </g> <g clip-path="url(#paf30b0d2f5)"> <use href="#C0_0_623b9ded61" x="434.94" y="107.13" style="fill: #482878; stroke: #482878"/> </g> <g clip-path="url(#paf30b0d2f5)"> <use href="#C0_0_623b9ded61" x="434.94" y="98.16" style="fill: #3e4989; stroke: #3e4989"/> </g> <g clip-path="url(#paf30b0d2f5)"> <use href="#C0_0_623b9ded61" x="434.94" y="91.05" style="fill: #31688e; stroke: #31688e"/> </g> <g clip-path="url(#paf30b0d2f5)"> <use href="#C0_0_623b9ded61" x="434.94" y="79.96" style="fill: #26828e; stroke: #26828e"/> </g> <g clip-path="url(#paf30b0d2f5)"> <use href="#C0_0_623b9ded61" x="434.94" y="72.86" style="fill: #1f9e89; stroke: #1f9e89"/> </g> <g clip-path="url(#paf30b0d2f5)"> <use href="#C0_0_623b9ded61" x="434.94" y="66.24" style="fill: #35b779; stroke: #35b779"/> </g> <g clip-path="url(#paf30b0d2f5)"> <use href="#C0_0_623b9ded61" x="434.94" y="65.28" style="fill: #6ece58; stroke: #6ece58"/> </g> <g clip-path="url(#paf30b0d2f5)"> <use href="#C0_0_623b9ded61" x="434.94" y="60.57" style="fill: #b5de2b; stroke: #b5de2b"/> </g> <g clip-path="url(#paf30b0d2f5)"> <use href="#C0_0_623b9ded61" x="434.94" y="59.13" style="fill: #fde725; stroke: #fde725"/> </g> <g clip-path="url(#paf30b0d2f5)"> <use href="#C0_0_623b9ded61" x="475.52" y="263.66" style="fill: #440154; stroke: #440154"/> </g> <g clip-path="url(#paf30b0d2f5)"> <use href="#C0_0_623b9ded61" x="475.52" y="105.50" style="fill: #482878; stroke: #482878"/> </g> <g clip-path="url(#paf30b0d2f5)"> <use href="#C0_0_623b9ded61" x="475.52" y="99.12" style="fill: #3e4989; stroke: #3e4989"/> </g> <g clip-path="url(#paf30b0d2f5)"> <use href="#C0_0_623b9ded61" x="475.52" y="91.29" style="fill: #31688e; stroke: #31688e"/> </g> <g clip-path="url(#paf30b0d2f5)"> <use href="#C0_0_623b9ded61" x="475.52" y="83.04" style="fill: #26828e; stroke: #26828e"/> </g> <g clip-path="url(#paf30b0d2f5)"> <use href="#C0_0_623b9ded61" x="475.52" y="71.90" style="fill: #1f9e89; stroke: #1f9e89"/> </g> <g clip-path="url(#paf30b0d2f5)"> <use href="#C0_0_623b9ded61" x="475.52" y="67.2" style="fill: #35b779; stroke: #35b779"/> </g> <g clip-path="url(#paf30b0d2f5)"> <use href="#C0_0_623b9ded61" x="475.52" y="61.05" style="fill: #6ece58; stroke: #6ece58"/> </g> <g clip-path="url(#paf30b0d2f5)"> <use href="#C0_0_623b9ded61" x="475.52" y="59.37" style="fill: #b5de2b; stroke: #b5de2b"/> </g> <g clip-path="url(#paf30b0d2f5)"> <use href="#C0_0_623b9ded61" x="475.52" y="57.02" style="fill: #fde725; stroke: #fde725"/> </g> <g clip-path="url(#paf30b0d2f5)"> <use href="#C0_0_623b9ded61" x="516.10" y="281.90" style="fill: #440154; stroke: #440154"/> </g> <g clip-path="url(#paf30b0d2f5)"> <use href="#C0_0_623b9ded61" x="516.10" y="109.72" style="fill: #482878; stroke: #482878"/> </g> <g clip-path="url(#paf30b0d2f5)"> <use href="#C0_0_623b9ded61" x="516.10" y="99.26" style="fill: #3e4989; stroke: #3e4989"/> </g> <g clip-path="url(#paf30b0d2f5)"> <use href="#C0_0_623b9ded61" x="516.10" y="88.94" style="fill: #31688e; stroke: #31688e"/> </g> <g clip-path="url(#paf30b0d2f5)"> <use href="#C0_0_623b9ded61" x="516.10" y="80.78" style="fill: #26828e; stroke: #26828e"/> </g> <g clip-path="url(#paf30b0d2f5)"> <use href="#C0_0_623b9ded61" x="516.10" y="71.37" style="fill: #1f9e89; stroke: #1f9e89"/> </g> <g clip-path="url(#paf30b0d2f5)"> <use href="#C0_0_623b9ded61" x="516.10" y="65.66" style="fill: #35b779; stroke: #35b779"/> </g> <g clip-path="url(#paf30b0d2f5)"> <use href="#C0_0_623b9ded61" x="516.10" y="62.30" style="fill: #6ece58; stroke: #6ece58"/> </g> <g clip-path="url(#paf30b0d2f5)"> <use href="#C0_0_623b9ded61" x="516.10" y="58.27" style="fill: #b5de2b; stroke: #b5de2b"/> </g> <g clip-path="url(#paf30b0d2f5)"> <use href="#C0_0_623b9ded61" x="516.10" y="55.58" style="fill: #fde725; stroke: #fde725"/> </g> </g> <g id="matplotlib.axis_1"> <g id="xtick_1"> <g id="line2d_1"> <path d="M 110.29 320.4 L 110.29 43.2 " clip-path="url(#paf30b0d2f5)" style="fill: none; stroke: #b0b0b0; stroke-width: 0.8; stroke-linecap: square"/> </g> <g id="line2d_2"> <defs> <path id="m1504cfccaf" d="M 0 0 L 0 3.5 " style="stroke: #000000; stroke-width: 0.8"/> </defs> <g> <use href="#m1504cfccaf" x="110.29" y="320.4" style="stroke: #000000; stroke-width: 0.8"/> </g> </g> <g id="text_1"> <!-- 3.2 --> <g transform="translate(102.33 334.99) scale(0.1 -0.1)"> <defs> <path id="m-33" d="M 2597 2516 Q 3050 2419 3304 2112 Q 3559 1806 3559 1356 Q 3559 666 3084 287 Q 2609 -91 1734 -91 Q 1441 -91 1130 -33 Q 819 25 488 141 L 488 750 Q 750 597 1062 519 Q 1375 441 1716 441 Q 2309 441 2620 675 Q 2931 909 2931 1356 Q 2931 1769 2642 2001 Q 2353 2234 1838 2234 L 1294 2234 L 1294 2753 L 1863 2753 Q 2328 2753 2575 2939 Q 2822 3125 2822 3475 Q 2822 3834 2567 4026 Q 2313 4219 1838 4219 Q 1578 4219 1281 4162 Q 984 4106 628 3988 L 628 4550 Q 988 4650 1302 4700 Q 1616 4750 1894 4750 Q 2613 4750 3031 4423 Q 3450 4097 3450 3541 Q 3450 3153 3228 2886 Q 3006 2619 2597 2516 z " transform="scale(0.015625)"/> <path id="m-2e" d="M 684 794 L 1344 794 L 1344 0 L 684 0 L 684 794 z " transform="scale(0.015625)"/> <path id="m-32" d="M 1228 531 L 3431 531 L 3431 0 L 469 0 L 469 531 Q 828 903 1448 1529 Q 2069 2156 2228 2338 Q 2531 2678 2651 2914 Q 2772 3150 2772 3378 Q 2772 3750 2511 3984 Q 2250 4219 1831 4219 Q 1534 4219 1204 4116 Q 875 4013 500 3803 L 500 4441 Q 881 4594 1212 4672 Q 1544 4750 1819 4750 Q 2544 4750 2975 4387 Q 3406 4025 3406 3419 Q 3406 3131 3298 2873 Q 3191 2616 2906 2266 Q 2828 2175 2409 1742 Q 1991 1309 1228 531 z " transform="scale(0.015625)"/> </defs> <use href="#m-33"/> <use href="#m-2e" transform="translate(63.62 0)"/> <use href="#m-32" transform="translate(95.41 0)"/> </g> </g> </g> <g id="xtick_2"> <g id="line2d_3"> <path d="M 191.45 320.4 L 191.45 43.2 " clip-path="url(#paf30b0d2f5)" style="fill: none; stroke: #b0b0b0; stroke-width: 0.8; stroke-linecap: square"/> </g> <g id="line2d_4"> <g> <use href="#m1504cfccaf" x="191.45" y="320.4" style="stroke: #000000; stroke-width: 0.8"/> </g> </g> <g id="text_2"> <!-- 3.4 --> <g transform="translate(183.50 334.99) scale(0.1 -0.1)"> <defs> <path id="m-34" d="M 2419 4116 L 825 1625 L 2419 1625 L 2419 4116 z M 2253 4666 L 3047 4666 L 3047 1625 L 3713 1625 L 3713 1100 L 3047 1100 L 3047 0 L 2419 0 L 2419 1100 L 313 1100 L 313 1709 L 2253 4666 z " transform="scale(0.015625)"/> </defs> <use href="#m-33"/> <use href="#m-2e" transform="translate(63.62 0)"/> <use href="#m-34" transform="translate(95.41 0)"/> </g> </g> </g> <g id="xtick_3"> <g id="line2d_5"> <path d="M 272.61 320.4 L 272.61 43.2 " clip-path="url(#paf30b0d2f5)" style="fill: none; stroke: #b0b0b0; stroke-width: 0.8; stroke-linecap: square"/> </g> <g id="line2d_6"> <g> <use href="#m1504cfccaf" x="272.61" y="320.4" style="stroke: #000000; stroke-width: 0.8"/> </g> </g> <g id="text_3"> <!-- 3.6 --> <g transform="translate(264.66 334.99) scale(0.1 -0.1)"> <defs> <path id="m-36" d="M 2113 2584 Q 1688 2584 1439 2293 Q 1191 2003 1191 1497 Q 1191 994 1439 701 Q 1688 409 2113 409 Q 2538 409 2786 701 Q 3034 994 3034 1497 Q 3034 2003 2786 2293 Q 2538 2584 2113 2584 z M 3366 4563 L 3366 3988 Q 3128 4100 2886 4159 Q 2644 4219 2406 4219 Q 1781 4219 1451 3797 Q 1122 3375 1075 2522 Q 1259 2794 1537 2939 Q 1816 3084 2150 3084 Q 2853 3084 3261 2657 Q 3669 2231 3669 1497 Q 3669 778 3244 343 Q 2819 -91 2113 -91 Q 1303 -91 875 529 Q 447 1150 447 2328 Q 447 3434 972 4092 Q 1497 4750 2381 4750 Q 2619 4750 2861 4703 Q 3103 4656 3366 4563 z " transform="scale(0.015625)"/> </defs> <use href="#m-33"/> <use href="#m-2e" transform="translate(63.62 0)"/> <use href="#m-36" transform="translate(95.41 0)"/> </g> </g> </g> <g id="xtick_4"> <g id="line2d_7"> <path d="M 353.78 320.4 L 353.78 43.2 " clip-path="url(#paf30b0d2f5)" style="fill: none; stroke: #b0b0b0; stroke-width: 0.8; stroke-linecap: square"/> </g> <g id="line2d_8"> <g> <use href="#m1504cfccaf" x="353.78" y="320.4" style="stroke: #000000; stroke-width: 0.8"/> </g> </g> <g id="text_4"> <!-- 3.8 --> <g transform="translate(345.83 334.99) scale(0.1 -0.1)"> <defs> <path id="m-38" d="M 2034 2216 Q 1584 2216 1326 1975 Q 1069 1734 1069 1313 Q 1069 891 1326 650 Q 1584 409 2034 409 Q 2484 409 2743 651 Q 3003 894 3003 1313 Q 3003 1734 2745 1975 Q 2488 2216 2034 2216 z M 1403 2484 Q 997 2584 770 2862 Q 544 3141 544 3541 Q 544 4100 942 4425 Q 1341 4750 2034 4750 Q 2731 4750 3128 4425 Q 3525 4100 3525 3541 Q 3525 3141 3298 2862 Q 3072 2584 2669 2484 Q 3125 2378 3379 2068 Q 3634 1759 3634 1313 Q 3634 634 3220 271 Q 2806 -91 2034 -91 Q 1263 -91 848 271 Q 434 634 434 1313 Q 434 1759 690 2068 Q 947 2378 1403 2484 z M 1172 3481 Q 1172 3119 1398 2916 Q 1625 2713 2034 2713 Q 2441 2713 2670 2916 Q 2900 3119 2900 3481 Q 2900 3844 2670 4047 Q 2441 4250 2034 4250 Q 1625 4250 1398 4047 Q 1172 3844 1172 3481 z " transform="scale(0.015625)"/> </defs> <use href="#m-33"/> <use href="#m-2e" transform="translate(63.62 0)"/> <use href="#m-38" transform="translate(95.41 0)"/> </g> </g> </g> <g id="xtick_5"> <g id="line2d_9"> <path d="M 434.94 320.4 L 434.94 43.2 " clip-path="url(#paf30b0d2f5)" style="fill: none; stroke: #b0b0b0; stroke-width: 0.8; stroke-linecap: square"/> </g> <g id="line2d_10"> <g> <use href="#m1504cfccaf" x="434.94" y="320.4" style="stroke: #000000; stroke-width: 0.8"/> </g> </g> <g id="text_5"> <!-- 4.0 --> <g transform="translate(426.99 334.99) scale(0.1 -0.1)"> <defs> <path id="m-30" d="M 2034 4250 Q 1547 4250 1301 3770 Q 1056 3291 1056 2328 Q 1056 1369 1301 889 Q 1547 409 2034 409 Q 2525 409 2770 889 Q 3016 1369 3016 2328 Q 3016 3291 2770 3770 Q 2525 4250 2034 4250 z M 2034 4750 Q 2819 4750 3233 4129 Q 3647 3509 3647 2328 Q 3647 1150 3233 529 Q 2819 -91 2034 -91 Q 1250 -91 836 529 Q 422 1150 422 2328 Q 422 3509 836 4129 Q 1250 4750 2034 4750 z " transform="scale(0.015625)"/> </defs> <use href="#m-34"/> <use href="#m-2e" transform="translate(63.62 0)"/> <use href="#m-30" transform="translate(95.41 0)"/> </g> </g> </g> <g id="xtick_6"> <g id="line2d_11"> <path d="M 516.10 320.4 L 516.10 43.2 " clip-path="url(#paf30b0d2f5)" style="fill: none; stroke: #b0b0b0; stroke-width: 0.8; stroke-linecap: square"/> </g> <g id="line2d_12"> <g> <use href="#m1504cfccaf" x="516.10" y="320.4" style="stroke: #000000; stroke-width: 0.8"/> </g> </g> <g id="text_6"> <!-- 4.2 --> <g transform="translate(508.15 334.99) scale(0.1 -0.1)"> <use href="#m-34"/> <use href="#m-2e" transform="translate(63.62 0)"/> <use href="#m-32" transform="translate(95.41 0)"/> </g> </g> </g> <g id="text_7"> <!-- Voltage (V) --> <g transform="translate(285.53 348.67) scale(0.1 -0.1)"> <defs> <path id="m-56" d="M 1831 0 L 50 4666 L 709 4666 L 2188 738 L 3669 4666 L 4325 4666 L 2547 0 L 1831 0 z " transform="scale(0.015625)"/> <path id="m-6f" d="M 1959 3097 Q 1497 3097 1228 2736 Q 959 2375 959 1747 Q 959 1119 1226 758 Q 1494 397 1959 397 Q 2419 397 2687 759 Q 2956 1122 2956 1747 Q 2956 2369 2687 2733 Q 2419 3097 1959 3097 z M 1959 3584 Q 2709 3584 3137 3096 Q 3566 2609 3566 1747 Q 3566 888 3137 398 Q 2709 -91 1959 -91 Q 1206 -91 779 398 Q 353 888 353 1747 Q 353 2609 779 3096 Q 1206 3584 1959 3584 z " transform="scale(0.015625)"/> <path id="m-6c" d="M 603 4863 L 1178 4863 L 1178 0 L 603 0 L 603 4863 z " transform="scale(0.015625)"/> <path id="m-74" d="M 1172 4494 L 1172 3500 L 2356 3500 L 2356 3053 L 1172 3053 L 1172 1153 Q 1172 725 1289 603 Q 1406 481 1766 481 L 2356 481 L 2356 0 L 1766 0 Q 1100 0 847 248 Q 594 497 594 1153 L 594 3053 L 172 3053 L 172 3500 L 594 3500 L 594 4494 L 1172 4494 z " transform="scale(0.015625)"/> <path id="m-61" d="M 2194 1759 Q 1497 1759 1228 1600 Q 959 1441 959 1056 Q 959 750 1161 570 Q 1363 391 1709 391 Q 2188 391 2477 730 Q 2766 1069 2766 1631 L 2766 1759 L 2194 1759 z M 3341 1997 L 3341 0 L 2766 0 L 2766 531 Q 2569 213 2275 61 Q 1981 -91 1556 -91 Q 1019 -91 701 211 Q 384 513 384 1019 Q 384 1609 779 1909 Q 1175 2209 1959 2209 L 2766 2209 L 2766 2266 Q 2766 2663 2505 2880 Q 2244 3097 1772 3097 Q 1472 3097 1187 3025 Q 903 2953 641 2809 L 641 3341 Q 956 3463 1253 3523 Q 1550 3584 1831 3584 Q 2591 3584 2966 3190 Q 3341 2797 3341 1997 z " transform="scale(0.015625)"/> <path id="m-67" d="M 2906 1791 Q 2906 2416 2648 2759 Q 2391 3103 1925 3103 Q 1463 3103 1205 2759 Q 947 2416 947 1791 Q 947 1169 1205 825 Q 1463 481 1925 481 Q 2391 481 2648 825 Q 2906 1169 2906 1791 z M 3481 434 Q 3481 -459 3084 -895 Q 2688 -1331 1869 -1331 Q 1566 -1331 1297 -1286 Q 1028 -1241 775 -1147 L 775 -588 Q 1028 -725 1275 -790 Q 1522 -856 1778 -856 Q 2344 -856 2625 -561 Q 2906 -266 2906 331 L 2906 616 Q 2728 306 2450 153 Q 2172 0 1784 0 Q 1141 0 747 490 Q 353 981 353 1791 Q 353 2603 747 3093 Q 1141 3584 1784 3584 Q 2172 3584 2450 3431 Q 2728 3278 2906 2969 L 2906 3500 L 3481 3500 L 3481 434 z " transform="scale(0.015625)"/> <path id="m-65" d="M 3597 1894 L 3597 1613 L 953 1613 Q 991 1019 1311 708 Q 1631 397 2203 397 Q 2534 397 2845 478 Q 3156 559 3463 722 L 3463 178 Q 3153 47 2828 -22 Q 2503 -91 2169 -91 Q 1331 -91 842 396 Q 353 884 353 1716 Q 353 2575 817 3079 Q 1281 3584 2069 3584 Q 2775 3584 3186 3129 Q 3597 2675 3597 1894 z M 3022 2063 Q 3016 2534 2758 2815 Q 2500 3097 2075 3097 Q 1594 3097 1305 2825 Q 1016 2553 972 2059 L 3022 2063 z " transform="scale(0.015625)"/> <path id="m-20" transform="scale(0.015625)"/> <path id="m-28" d="M 1984 4856 Q 1566 4138 1362 3434 Q 1159 2731 1159 2009 Q 1159 1288 1364 580 Q 1569 -128 1984 -844 L 1484 -844 Q 1016 -109 783 600 Q 550 1309 550 2009 Q 550 2706 781 3412 Q 1013 4119 1484 4856 L 1984 4856 z " transform="scale(0.015625)"/> <path id="m-29" d="M 513 4856 L 1013 4856 Q 1481 4119 1714 3412 Q 1947 2706 1947 2009 Q 1947 1309 1714 600 Q 1481 -109 1013 -844 L 513 -844 Q 928 -128 1133 580 Q 1338 1288 1338 2009 Q 1338 2731 1133 3434 Q 928 4138 513 4856 z " transform="scale(0.015625)"/> </defs> <use href="#m-56"/> <use href="#m-6f" transform="translate(60.65 0)"/> <use href="#m-6c" transform="translate(121.83 0)"/> <use href="#m-74" transform="translate(149.62 0)"/> <use href="#m-61" transform="translate(188.83 0)"/> <use href="#m-67" transform="translate(250.11 0)"/> <use href="#m-65" transform="translate(313.58 0)"/> <use href="#m-20" transform="translate(375.11 0)"/> <use href="#m-28" transform="translate(406.89 0)"/> <use href="#m-56" transform="translate(445.91 0)"/> <use href="#m-29" transform="translate(514.32 0)"/> </g> </g> </g> <g id="matplotlib.axis_2"> <g id="ytick_1"> <g id="line2d_13"> <path d="M 90 318.09 L 536.4 318.09 " clip-path="url(#paf30b0d2f5)" style="fill: none; stroke: #b0b0b0; stroke-width: 0.8; stroke-linecap: square"/> </g> <g id="line2d_14"> <defs> <path id="m5d545ce8f8" d="M 0 0 L -3.5 0 " style="stroke: #000000; stroke-width: 0.8"/> </defs> <g> <use href="#m5d545ce8f8" x="90" y="318.09" style="stroke: #000000; stroke-width: 0.8"/> </g> </g> <g id="text_8"> <!-- 70 --> <g transform="translate(70.27 321.89) scale(0.1 -0.1)"> <defs> <path id="m-37" d="M 525 4666 L 3525 4666 L 3525 4397 L 1831 0 L 1172 0 L 2766 4134 L 525 4134 L 525 4666 z " transform="scale(0.015625)"/> </defs> <use href="#m-37"/> <use href="#m-30" transform="translate(63.62 0)"/> </g> </g> </g> <g id="ytick_2"> <g id="line2d_15"> <path d="M 90 262.16 L 536.4 262.16 " clip-path="url(#paf30b0d2f5)" style="fill: none; stroke: #b0b0b0; stroke-width: 0.8; stroke-linecap: square"/> </g> <g id="line2d_16"> <g> <use href="#m5d545ce8f8" x="90" y="262.16" style="stroke: #000000; stroke-width: 0.8"/> </g> </g> <g id="text_9"> <!-- 75 --> <g transform="translate(70.27 265.96) scale(0.1 -0.1)"> <defs> <path id="m-35" d="M 691 4666 L 3169 4666 L 3169 4134 L 1269 4134 L 1269 2991 Q 1406 3038 1543 3061 Q 1681 3084 1819 3084 Q 2600 3084 3056 2656 Q 3513 2228 3513 1497 Q 3513 744 3044 326 Q 2575 -91 1722 -91 Q 1428 -91 1123 -41 Q 819 9 494 109 L 494 744 Q 775 591 1075 516 Q 1375 441 1709 441 Q 2250 441 2565 725 Q 2881 1009 2881 1497 Q 2881 1984 2565 2268 Q 2250 2553 1709 2553 Q 1456 2553 1204 2497 Q 953 2441 691 2322 L 691 4666 z " transform="scale(0.015625)"/> </defs> <use href="#m-37"/> <use href="#m-35" transform="translate(63.62 0)"/> </g> </g> </g> <g id="ytick_3"> <g id="line2d_17"> <path d="M 90 206.23 L 536.4 206.23 " clip-path="url(#paf30b0d2f5)" style="fill: none; stroke: #b0b0b0; stroke-width: 0.8; stroke-linecap: square"/> </g> <g id="line2d_18"> <g> <use href="#m5d545ce8f8" x="90" y="206.23" style="stroke: #000000; stroke-width: 0.8"/> </g> </g> <g id="text_10"> <!-- 80 --> <g transform="translate(70.27 210.03) scale(0.1 -0.1)"> <use href="#m-38"/> <use href="#m-30" transform="translate(63.62 0)"/> </g> </g> </g> <g id="ytick_4"> <g id="line2d_19"> <path d="M 90 150.29 L 536.4 150.29 " clip-path="url(#paf30b0d2f5)" style="fill: none; stroke: #b0b0b0; stroke-width: 0.8; stroke-linecap: square"/> </g> <g id="line2d_20"> <g> <use href="#m5d545ce8f8" x="90" y="150.29" style="stroke: #000000; stroke-width: 0.8"/> </g> </g> <g id="text_11"> <!-- 85 --> <g transform="translate(70.27 154.09) scale(0.1 -0.1)"> <use href="#m-38"/> <use href="#m-35" transform="translate(63.62 0)"/> </g> </g> </g> <g id="ytick_5"> <g id="line2d_21"> <path d="M 90 94.36 L 536.4 94.36 " clip-path="url(#paf30b0d2f5)" style="fill: none; stroke: #b0b0b0; stroke-width: 0.8; stroke-linecap: square"/> </g> <g id="line2d_22"> <g> <use href="#m5d545ce8f8" x="90" y="94.36" style="stroke: #000000; stroke-width: 0.8"/> </g> </g> <g id="text_12"> <!-- 90 --> <g transform="translate(70.27 98.16) scale(0.1 -0.1)"> <defs> <path id="m-39" d="M 703 97 L 703 672 Q 941 559 1184 500 Q 1428 441 1663 441 Q 2288 441 2617 861 Q 2947 1281 2994 2138 Q 2813 1869 2534 1725 Q 2256 1581 1919 1581 Q 1219 1581 811 2004 Q 403 2428 403 3163 Q 403 3881 828 4315 Q 1253 4750 1959 4750 Q 2769 4750 3195 4129 Q 3622 3509 3622 2328 Q 3622 1225 3098 567 Q 2575 -91 1691 -91 Q 1453 -91 1209 -44 Q 966 3 703 97 z M 1959 2075 Q 2384 2075 2632 2365 Q 2881 2656 2881 3163 Q 2881 3666 2632 3958 Q 2384 4250 1959 4250 Q 1534 4250 1286 3958 Q 1038 3666 1038 3163 Q 1038 2656 1286 2365 Q 1534 2075 1959 2075 z " transform="scale(0.015625)"/> </defs> <use href="#m-39"/> <use href="#m-30" transform="translate(63.62 0)"/> </g> </g> </g> <g id="text_13"> <!-- Efficiency (%) --> <g transform="translate(64.19 216.20) rotate(-90) scale(0.1 -0.1)"> <defs> <path id="m-45" d="M 628 4666 L 3578 4666 L 3578 4134 L 1259 4134 L 1259 2753 L 3481 2753 L 3481 2222 L 1259 2222 L 1259 531 L 3634 531 L 3634 0 L 628 0 L 628 4666 z " transform="scale(0.015625)"/> <path id="m-66" d="M 2375 4863 L 2375 4384 L 1825 4384 Q 1516 4384 1395 4259 Q 1275 4134 1275 3809 L 1275 3500 L 2222 3500 L 2222 3053 L 1275 3053 L 1275 0 L 697 0 L 697 3053 L 147 3053 L 147 3500 L 697 3500 L 697 3744 Q 697 4328 969 4595 Q 1241 4863 1831 4863 L 2375 4863 z " transform="scale(0.015625)"/> <path id="m-69" d="M 603 3500 L 1178 3500 L 1178 0 L 603 0 L 603 3500 z M 603 4863 L 1178 4863 L 1178 4134 L 603 4134 L 603 4863 z " transform="scale(0.015625)"/> <path id="m-63" d="M 3122 3366 L 3122 2828 Q 2878 2963 2633 3030 Q 2388 3097 2138 3097 Q 1578 3097 1268 2742 Q 959 2388 959 1747 Q 959 1106 1268 751 Q 1578 397 2138 397 Q 2388 397 2633 464 Q 2878 531 3122 666 L 3122 134 Q 2881 22 2623 -34 Q 2366 -91 2075 -91 Q 1284 -91 818 406 Q 353 903 353 1747 Q 353 2603 823 3093 Q 1294 3584 2113 3584 Q 2378 3584 2631 3529 Q 2884 3475 3122 3366 z " transform="scale(0.015625)"/> <path id="m-6e" d="M 3513 2113 L 3513 0 L 2938 0 L 2938 2094 Q 2938 2591 2744 2837 Q 2550 3084 2163 3084 Q 1697 3084 1428 2787 Q 1159 2491 1159 1978 L 1159 0 L 581 0 L 581 3500 L 1159 3500 L 1159 2956 Q 1366 3272 1645 3428 Q 1925 3584 2291 3584 Q 2894 3584 3203 3211 Q 3513 2838 3513 2113 z " transform="scale(0.015625)"/> <path id="m-79" d="M 2059 -325 Q 1816 -950 1584 -1140 Q 1353 -1331 966 -1331 L 506 -1331 L 506 -850 L 844 -850 Q 1081 -850 1212 -737 Q 1344 -625 1503 -206 L 1606 56 L 191 3500 L 800 3500 L 1894 763 L 2988 3500 L 3597 3500 L 2059 -325 z " transform="scale(0.015625)"/> <path id="m-25" d="M 4653 2053 Q 4381 2053 4226 1822 Q 4072 1591 4072 1178 Q 4072 772 4226 539 Q 4381 306 4653 306 Q 4919 306 5073 539 Q 5228 772 5228 1178 Q 5228 1588 5073 1820 Q 4919 2053 4653 2053 z M 4653 2450 Q 5147 2450 5437 2106 Q 5728 1763 5728 1178 Q 5728 594 5436 251 Q 5144 -91 4653 -91 Q 4153 -91 3862 251 Q 3572 594 3572 1178 Q 3572 1766 3864 2108 Q 4156 2450 4653 2450 z M 1428 4353 Q 1159 4353 1004 4120 Q 850 3888 850 3481 Q 850 3069 1003 2837 Q 1156 2606 1428 2606 Q 1700 2606 1854 2837 Q 2009 3069 2009 3481 Q 2009 3884 1853 4118 Q 1697 4353 1428 4353 z M 4250 4750 L 4750 4750 L 1831 -91 L 1331 -91 L 4250 4750 z M 1428 4750 Q 1922 4750 2215 4408 Q 2509 4066 2509 3481 Q 2509 2891 2217 2550 Q 1925 2209 1428 2209 Q 931 2209 642 2551 Q 353 2894 353 3481 Q 353 4063 643 4406 Q 934 4750 1428 4750 z " transform="scale(0.015625)"/> </defs> <use href="#m-45"/> <use href="#m-66" transform="translate(63.18 0)"/> <use href="#m-66" transform="translate(98.38 0)"/> <use href="#m-69" transform="translate(133.59 0)"/> <use href="#m-63" transform="translate(161.37 0)"/> <use href="#m-69" transform="translate(216.35 0)"/> <use href="#m-65" transform="translate(244.14 0)"/> <use href="#m-6e" transform="translate(305.66 0)"/> <use href="#m-63" transform="translate(369.04 0)"/> <use href="#m-79" transform="translate(424.02 0)"/> <use href="#m-20" transform="translate(483.20 0)"/> <use href="#m-28" transform="translate(514.99 0)"/> <use href="#m-25" transform="translate(554.00 0)"/> <use href="#m-29" transform="translate(649.02 0)"/> </g> </g> </g> <g id="patch_3"> <path d="M 90 320.4 L 90 43.2 " style="fill: none; stroke: #000000; stroke-width: 0.8; stroke-linejoin: miter; stroke-linecap: square"/> </g> <g id="patch_4"> <path d="M 536.4 320.4 L 536.4 43.2 " style="fill: none; stroke: #000000; stroke-width: 0.8; stroke-linejoin: miter; stroke-linecap: square"/> </g> <g id="patch_5"> <path d="M 90 320.4 L 536.4 320.4 " style="fill: none; stroke: #000000; stroke-width: 0.8; stroke-linejoin: miter; stroke-linecap: square"/> </g> <g id="patch_6"> <path d="M 90 43.2 L 536.4 43.2 " style="fill: none; stroke: #000000; stroke-width: 0.8; stroke-linejoin: miter; stroke-linecap: square"/> </g> <g id="text_14"> <!-- Efficiency Characteristic --> <g transform="translate(240.56 37.2) scale(0.12 -0.12)"> <defs> <path id="m-43" d="M 4122 4306 L 4122 3641 Q 3803 3938 3442 4084 Q 3081 4231 2675 4231 Q 1875 4231 1450 3742 Q 1025 3253 1025 2328 Q 1025 1406 1450 917 Q 1875 428 2675 428 Q 3081 428 3442 575 Q 3803 722 4122 1019 L 4122 359 Q 3791 134 3420 21 Q 3050 -91 2638 -91 Q 1578 -91 968 557 Q 359 1206 359 2328 Q 359 3453 968 4101 Q 1578 4750 2638 4750 Q 3056 4750 3426 4639 Q 3797 4528 4122 4306 z " transform="scale(0.015625)"/> <path id="m-68" d="M 3513 2113 L 3513 0 L 2938 0 L 2938 2094 Q 2938 2591 2744 2837 Q 2550 3084 2163 3084 Q 1697 3084 1428 2787 Q 1159 2491 1159 1978 L 1159 0 L 581 0 L 581 4863 L 1159 4863 L 1159 2956 Q 1366 3272 1645 3428 Q 1925 3584 2291 3584 Q 2894 3584 3203 3211 Q 3513 2838 3513 2113 z " transform="scale(0.015625)"/> <path id="m-72" d="M 2631 2963 Q 2534 3019 2420 3045 Q 2306 3072 2169 3072 Q 1681 3072 1420 2755 Q 1159 2438 1159 1844 L 1159 0 L 581 0 L 581 3500 L 1159 3500 L 1159 2956 Q 1341 3275 1631 3429 Q 1922 3584 2338 3584 Q 2397 3584 2469 3576 Q 2541 3569 2628 3553 L 2631 2963 z " transform="scale(0.015625)"/> <path id="m-73" d="M 2834 3397 L 2834 2853 Q 2591 2978 2328 3040 Q 2066 3103 1784 3103 Q 1356 3103 1142 2972 Q 928 2841 928 2578 Q 928 2378 1081 2264 Q 1234 2150 1697 2047 L 1894 2003 Q 2506 1872 2764 1633 Q 3022 1394 3022 966 Q 3022 478 2636 193 Q 2250 -91 1575 -91 Q 1294 -91 989 -36 Q 684 19 347 128 L 347 722 Q 666 556 975 473 Q 1284 391 1588 391 Q 1994 391 2212 530 Q 2431 669 2431 922 Q 2431 1156 2273 1281 Q 2116 1406 1581 1522 L 1381 1569 Q 847 1681 609 1914 Q 372 2147 372 2553 Q 372 3047 722 3315 Q 1072 3584 1716 3584 Q 2034 3584 2315 3537 Q 2597 3491 2834 3397 z " transform="scale(0.015625)"/> </defs> <use href="#m-45"/> <use href="#m-66" transform="translate(63.18 0)"/> <use href="#m-66" transform="translate(98.38 0)"/> <use href="#m-69" transform="translate(133.59 0)"/> <use href="#m-63" transform="translate(161.37 0)"/> <use href="#m-69" transform="translate(216.35 0)"/> <use href="#m-65" transform="translate(244.14 0)"/> <use href="#m-6e" transform="translate(305.66 0)"/> <use href="#m-63" transform="translate(369.04 0)"/> <use href="#m-79" transform="translate(424.02 0)"/> <use href="#m-20" transform="translate(483.20 0)"/> <use href="#m-43" transform="translate(514.99 0)"/> <use href="#m-68" transform="translate(584.81 0)"/> <use href="#m-61" transform="translate(648.19 0)"/> <use href="#m-72" transform="translate(709.47 0)"/> <use href="#m-61" transform="translate(750.58 0)"/> <use href="#m-63" transform="translate(811.86 0)"/> <use href="#m-74" transform="translate(866.84 0)"/> <use href="#m-65" transform="translate(906.05 0)"/> <use href="#m-72" transform="translate(967.57 0)"/> <use href="#m-69" transform="translate(1008.69 0)"/> <use href="#m-73" transform="translate(1036.47 0)"/> <use href="#m-74" transform="translate(1088.57 0)"/> <use href="#m-69" transform="translate(1127.78 0)"/> <use href="#m-63" transform="translate(1155.56 0)"/> </g> </g> </g> <g id="axes_2"> <g id="patch_7"> <path d="M 564.3 320.4 L 578.16 320.4 L 578.16 43.2 L 564.3 43.2 z " style="fill: #ffffff"/> </g> <defs><linearGradient id="vir" x1="0" y1="0" x2="0" y2="1"><stop offset="0.0000" stop-color="#fde725"/><stop offset="0.0250" stop-color="#efe51c"/><stop offset="0.0500" stop-color="#dfe318"/><stop offset="0.0750" stop-color="#cde11d"/><stop offset="0.1000" stop-color="#bddf26"/><stop offset="0.1250" stop-color="#addc30"/><stop offset="0.1500" stop-color="#9bd93c"/><stop offset="0.1750" stop-color="#8bd646"/><stop offset="0.2000" stop-color="#7ad151"/><stop offset="0.2250" stop-color="#6ccd5a"/><stop offset="0.2500" stop-color="#5ec962"/><stop offset="0.2750" stop-color="#50c46a"/><stop offset="0.3000" stop-color="#44bf70"/><stop offset="0.3250" stop-color="#38b977"/><stop offset="0.3500" stop-color="#2fb47c"/><stop offset="0.3750" stop-color="#28ae80"/><stop offset="0.4000" stop-color="#22a884"/><stop offset="0.4250" stop-color="#1fa287"/><stop offset="0.4500" stop-color="#1e9c89"/><stop offset="0.4750" stop-color="#1f968b"/><stop offset="0.5000" stop-color="#21918c"/><stop offset="0.5250" stop-color="#238a8d"/><stop offset="0.5500" stop-color="#25848e"/><stop offset="0.5750" stop-color="#277e8e"/><stop offset="0.6000" stop-color="#2a788e"/><stop offset="0.6250" stop-color="#2c728e"/><stop offset="0.6500" stop-color="#2f6c8e"/><stop offset="0.6750" stop-color="#31668e"/><stop offset="0.7000" stop-color="#355f8d"/><stop offset="0.7250" stop-color="#38598c"/><stop offset="0.7500" stop-color="#3b528b"/><stop offset="0.7750" stop-color="#3e4a89"/><stop offset="0.8000" stop-color="#414487"/><stop offset="0.8250" stop-color="#443b84"/><stop offset="0.8500" stop-color="#463480"/><stop offset="0.8750" stop-color="#472d7b"/><stop offset="0.9000" stop-color="#482475"/><stop offset="0.9250" stop-color="#481c6e"/><stop offset="0.9500" stop-color="#471365"/><stop offset="0.9750" stop-color="#460a5d"/><stop offset="1.0000" stop-color="#440154"/></linearGradient></defs><rect x="564.48" y="43.2" width="13.92" height="277.44" fill="url(#vir)"/> <g id="matplotlib.axis_3"/> <g id="matplotlib.axis_4"> <g id="ytick_6"> <g id="line2d_23"> <defs> <path id="m33c4ce201d" d="M 0 0 L 3.5 0 " style="stroke: #000000; stroke-width: 0.8"/> </defs> <g> <use href="#m33c4ce201d" x="578.16" y="320.4" style="stroke: #000000; stroke-width: 0.8"/> </g> </g> <g id="text_15"> <!-- 0.1 --> <g transform="translate(585.16 324.19) scale(0.1 -0.1)"> <defs> <path id="m-31" d="M 794 531 L 1825 531 L 1825 4091 L 703 3866 L 703 4441 L 1819 4666 L 2450 4666 L 2450 531 L 3481 531 L 3481 0 L 794 0 L 794 531 z " transform="scale(0.015625)"/> </defs> <use href="#m-30"/> <use href="#m-2e" transform="translate(63.62 0)"/> <use href="#m-31" transform="translate(95.41 0)"/> </g> </g> </g> <g id="ytick_7"> <g id="line2d_24"> <g> <use href="#m33c4ce201d" x="578.16" y="289.6" style="stroke: #000000; stroke-width: 0.8"/> </g> </g> <g id="text_16"> <!-- 0.2 --> <g transform="translate(585.16 293.39) scale(0.1 -0.1)"> <use href="#m-30"/> <use href="#m-2e" transform="translate(63.62 0)"/> <use href="#m-32" transform="translate(95.41 0)"/> </g> </g> </g> <g id="ytick_8"> <g id="line2d_25"> <g> <use href="#m33c4ce201d" x="578.16" y="258.8" style="stroke: #000000; stroke-width: 0.8"/> </g> </g> <g id="text_17"> <!-- 0.3 --> <g transform="translate(585.16 262.59) scale(0.1 -0.1)"> <use href="#m-30"/> <use href="#m-2e" transform="translate(63.62 0)"/> <use href="#m-33" transform="translate(95.41 0)"/> </g> </g> </g> <g id="ytick_9"> <g id="line2d_26"> <g> <use href="#m33c4ce201d" x="578.16" y="228" style="stroke: #000000; stroke-width: 0.8"/> </g> </g> <g id="text_18"> <!-- 0.4 --> <g transform="translate(585.16 231.79) scale(0.1 -0.1)"> <use href="#m-30"/> <use href="#m-2e" transform="translate(63.62 0)"/> <use href="#m-34" transform="translate(95.41 0)"/> </g> </g> </g> <g id="ytick_10"> <g id="line2d_27"> <g> <use href="#m33c4ce201d" x="578.16" y="197.2" style="stroke: #000000; stroke-width: 0.8"/> </g> </g> <g id="text_19"> <!-- 0.5 --> <g transform="translate(585.16 200.99) scale(0.1 -0.1)"> <use href="#m-30"/> <use href="#m-2e" transform="translate(63.62 0)"/> <use href="#m-35" transform="translate(95.41 0)"/> </g> </g> </g> <g id="ytick_11"> <g id="line2d_28"> <g> <use href="#m33c4ce201d" x="578.16" y="166.4" style="stroke: #000000; stroke-width: 0.8"/> </g> </g> <g id="text_20"> <!-- 0.6 --> <g transform="translate(585.16 170.19) scale(0.1 -0.1)"> <use href="#m-30"/> <use href="#m-2e" transform="translate(63.62 0)"/> <use href="#m-36" transform="translate(95.41 0)"/> </g> </g> </g> <g id="ytick_12"> <g id="line2d_29"> <g> <use href="#m33c4ce201d" x="578.16" y="135.6" style="stroke: #000000; stroke-width: 0.8"/> </g> </g> <g id="text_21"> <!-- 0.7 --> <g transform="translate(585.16 139.39) scale(0.1 -0.1)"> <use href="#m-30"/> <use href="#m-2e" transform="translate(63.62 0)"/> <use href="#m-37" transform="translate(95.41 0)"/> </g> </g> </g> <g id="ytick_13"> <g id="line2d_30"> <g> <use href="#m33c4ce201d" x="578.16" y="104.8" style="stroke: #000000; stroke-width: 0.8"/> </g> </g> <g id="text_22"> <!-- 0.8 --> <g transform="translate(585.16 108.59) scale(0.1 -0.1)"> <use href="#m-30"/> <use href="#m-2e" transform="translate(63.62 0)"/> <use href="#m-38" transform="translate(95.41 0)"/> </g> </g> </g> <g id="ytick_14"> <g id="line2d_31"> <g> <use href="#m33c4ce201d" x="578.16" y="74" style="stroke: #000000; stroke-width: 0.8"/> </g> </g> <g id="text_23"> <!-- 0.9 --> <g transform="translate(585.16 77.79) scale(0.1 -0.1)"> <use href="#m-30"/> <use href="#m-2e" transform="translate(63.62 0)"/> <use href="#m-39" transform="translate(95.41 0)"/> </g> </g> </g> <g id="ytick_15"> <g id="line2d_32"> <g> <use href="#m33c4ce201d" x="578.16" y="43.2" style="stroke: #000000; stroke-width: 0.8"/> </g> </g> <g id="text_24"> <!-- 1.0 --> <g transform="translate(585.16 46.99) scale(0.1 -0.1)"> <use href="#m-31"/> <use href="#m-2e" transform="translate(63.62 0)"/> <use href="#m-30" transform="translate(95.41 0)"/> </g> </g> </g> <g id="text_25"> <!-- Current (A) --> <g transform="translate(612.66 209.48) rotate(-90) scale(0.1 -0.1)"> <defs> <path id="m-75" d="M 544 1381 L 544 3500 L 1119 3500 L 1119 1403 Q 1119 906 1312 657 Q 1506 409 1894 409 Q 2359 409 2629 706 Q 2900 1003 2900 1516 L 2900 3500 L 3475 3500 L 3475 0 L 2900 0 L 2900 538 Q 2691 219 2414 64 Q 2138 -91 1772 -91 Q 1169 -91 856 284 Q 544 659 544 1381 z M 1991 3584 L 1991 3584 z " transform="scale(0.015625)"/> <path id="m-41" d="M 2188 4044 L 1331 1722 L 3047 1722 L 2188 4044 z M 1831 4666 L 2547 4666 L 4325 0 L 3669 0 L 3244 1197 L 1141 1197 L 716 0 L 50 0 L 1831 4666 z " transform="scale(0.015625)"/> </defs> <use href="#m-43"/> <use href="#m-75" transform="translate(69.82 0)"/> <use href="#m-72" transform="translate(133.20 0)"/> <use href="#m-72" transform="translate(172.56 0)"/> <use href="#m-65" transform="translate(211.42 0)"/> <use href="#m-6e" transform="translate(272.95 0)"/> <use href="#m-74" transform="translate(336.33 0)"/> <use href="#m-20" transform="translate(375.54 0)"/> <use href="#m-28" transform="translate(407.32 0)"/> <use href="#m-41" transform="translate(446.34 0)"/> <use href="#m-29" transform="translate(514.75 0)"/> </g> </g> </g> <g id="LineCollection_1"/> <g id="patch_8"> <path d="M 564.3 320.4 L 571.23 320.4 L 578.16 320.4 L 578.16 43.2 L 571.23 43.2 L 564.3 43.2 L 564.3 320.4 z " style="fill: none; stroke: #000000; stroke-width: 0.8; stroke-linejoin: miter; stroke-linecap: square"/> </g> </g> </g> <defs> <clipPath id="paf30b0d2f5"> <rect x="90" y="43.2" width="446.4" height="277.2"/> </clipPath> </defs> </svg> </div>
  <div id="tb">
    <svg class="abs" style="left:0;top:0" width="320" height="50" viewBox="0 0 320 50">
      <defs><pattern id="chk" width="2" height="2" patternUnits="userSpaceOnUse"><rect width="1" height="1" fill="#000"/><rect x="1" y="1" width="1" height="1" fill="#000"/></pattern></defs>
      <path d="M6.9 28L21.9 16.3L28.2 21.2V16.3H32.8V24.8L37.3 28.3L35.3 30.6L21.9 20.2L8.9 30.4Z" fill="#000"/>
      <path d="M11 30.8L21.9 22.3L32.8 30.8V38.9C32.8 39.6 32.3 40.1 31.6 40.1H24.4V32.7H19.5V40.1H12.2C11.5 40.1 11 39.6 11 38.9Z" fill="#000"/>
      <path d="M48.17 25.71L63.22 10.65L67.57 14.99L60.42 22.07L76.88 22.07L76.88 29.35L60.42 29.35L67.57 36.42L63.22 40.76Z" fill="url(#chk)" stroke="url(#chk)" stroke-width="0.8" stroke-linejoin="round"/>
      <path d="M115.73 25.71L100.68 10.65L96.33 14.99L103.48 22.07L87.02 22.07L87.02 29.35L103.48 29.35L96.33 36.42L100.68 40.76Z" fill="url(#chk)" stroke="url(#chk)" stroke-width="0.8" stroke-linejoin="round"/>
      <rect x="128" y="7.3" width="1" height="35.5" fill="#999"/>
      <path d="M156 8.7L162.2 14.9C162.8 15.5 162.4 16.2 161.6 16.2H158.5V23H165.3V19.9C165.3 19.1 166 18.7 166.6 19.3L173.2 25.8L166.6 32.3C166 32.9 165.3 32.5 165.3 31.7V28.5H158.5V35.4H161.6C162.4 35.4 162.8 36.1 162.2 36.7L156 42.9L149.8 36.7C149.2 36.1 149.6 35.4 150.4 35.4H153.5V28.5H146.7V31.7C146.7 32.5 146 32.9 145.4 32.3L138.8 25.8L145.4 19.3C146 18.7 146.7 19.1 146.7 19.9V23H153.5V16.2H150.4C149.6 16.2 149.2 15.5 149.8 14.9Z" fill="#000"/>
      <circle cx="195.5" cy="23.2" r="11" fill="none" stroke="#000" stroke-width="4.7"/>
      <path d="M204 31.7L211.4 39.1" stroke="#000" stroke-width="5" stroke-linecap="round"/>
      <path d="M225.8 17.3H228M237.8 17.3H252.2M225.8 26.9H240.2M250.2 26.9H252.2M225.8 36.7H230.7M240.3 36.7H252.2" stroke="#000" stroke-width="2.8" stroke-linecap="round"/>
      <rect x="229.1" y="13.7" width="7.7" height="7.2" rx="1.6" fill="#000"/>
      <rect x="241.3" y="23.1" width="7.5" height="7.5" rx="1.6" fill="#000"/>
      <rect x="231.9" y="33.1" width="7.2" height="7.2" rx="1.6" fill="#000"/>
      <rect x="265" y="7.3" width="1" height="35.5" fill="#999"/>
      <path d="M278.7 12.3H296.9L305 20.4V38.9H278.7Z" fill="none" stroke="#000" stroke-width="2.8" stroke-linejoin="round"/>
      <path d="M282.3 12.3H296.7V21.6C296.7 22.3 296.2 22.8 295.5 22.8H283.5C282.8 22.8 282.3 22.3 282.3 21.6Z" fill="#000"/>
      <rect x="289.5" y="13.4" width="5" height="7.5" fill="#f0f0f0"/>
      <path d="M283.7 38.9V29.5H300V38.9" fill="none" stroke="#000" stroke-width="2.8" stroke-linejoin="round"/>
    </svg>
  </div>
</div>

<!-- watermark -->
<div class="abs" style="left:1546px;top:1664px;width:163px;height:56px;background:#fff;"></div>
<div class="abs" style="left:1548px;top:1664px;height:34px;"><svg class="cj" width="156.0" height="34" fill="#0b3a98"><use href="#gB77ff" transform="translate(0.0 28.5) scale(0.0312 -0.0312)"/><use href="#gB77f3" transform="translate(31.2 28.5) scale(0.0312 -0.0312)"/><use href="#gB6536" transform="translate(62.4 28.5) scale(0.0312 -0.0312)"/><use href="#gB97f3" transform="translate(93.6 28.5) scale(0.0312 -0.0312)"/><use href="#gB673a" transform="translate(124.8 28.5) scale(0.0312 -0.0312)"/></svg></div>
<div class="abs" style="left:1548px;top:1700px;font-size:17px;line-height:22px;font-weight:bold;color:#0a3a96;white-space:nowrap;letter-spacing:-0.3px">www.crystalradio.cn</div>
</body></html>
